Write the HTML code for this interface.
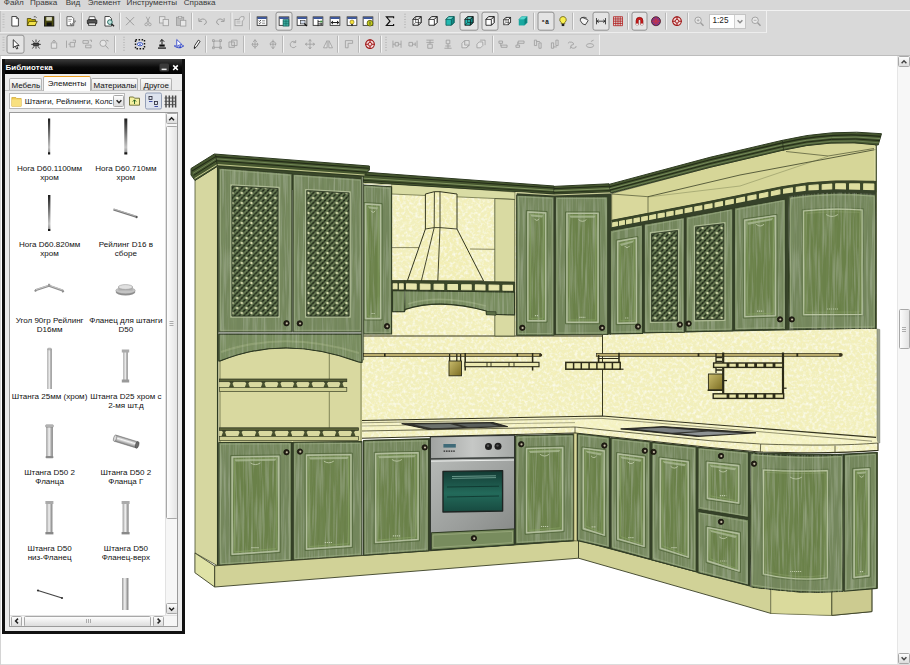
<!DOCTYPE html>
<html lang="ru"><head><meta charset="utf-8"><title>Кухня</title>
<style>
html,body{margin:0;padding:0;}
body{width:910px;height:665px;overflow:hidden;position:relative;background:#fff;font-family:"Liberation Sans",sans-serif;font-size:11px;color:#000;}
.abs{position:absolute;}
svg.kit{position:absolute;left:0;top:0;filter:blur(0.35px);}

.menubar{left:0;top:0;width:910px;height:10px;background:#d7d7d7;}
.menubar span{position:absolute;top:-2.500px;font-size:8.100px;line-height:10px;color:#3a3a3a;white-space:nowrap;}
.tbarea{left:0;top:10px;width:910px;height:45.500px;background:#d9d9d9;border-top:1px solid #f2f2f2;box-sizing:border-box;}
.tb1{left:0;top:10.500px;width:767px;height:22.500px;box-sizing:border-box;border-right:1px solid #f0f0f0;border-bottom:1px solid #ededed;box-shadow:1px 0 0 #c2c2c2 inset, -1px 0 0 #c4c4c4;}
.tb2{left:0;top:33.500px;width:600px;height:22px;box-sizing:border-box;border-right:1px solid #f0f0f0;border-top:1px solid #cbcbcb;}
.combo{left:709px;top:13.500px;width:37px;height:15px;background:#fff;border:1px solid #c4c4c4;box-sizing:border-box;}
.combo b{position:absolute;left:2.500px;top:1.500px;font-weight:400;font-size:8.200px;line-height:10px;color:#222;}
.combo i{position:absolute;right:0;top:0;width:10px;height:13px;border-left:1px solid #d0d0d0;background:#f4f4f4;}
.lib{left:2.200px;top:59.300px;width:182.600px;height:575.200px;background:#111;box-sizing:border-box;}
.libtitle{left:2.800px;top:0;width:177px;height:14.400px;background:linear-gradient(#3c3c3c,#0a0a0a 55%,#000);}
.libtitle span{position:absolute;left:0.400px;top:3.600px;font-size:8px;line-height:10px;font-weight:700;color:#fff;letter-spacing:0.05px;}
.libbody{left:2.800px;top:14.400px;width:177px;height:557.600px;background:#ececec;}
.tab{top:4.400px;height:12.700px;padding-top:0.500px;box-sizing:border-box;border:1px solid #b4b4b4;border-bottom:none;border-radius:2px 2px 0 0;background:linear-gradient(#fbfbfb,#dcdcdc);font-size:8px;line-height:11px;text-align:center;color:#111;white-space:nowrap;}
.tab.sel{top:2.100px;height:15px;padding-top:1px;background:#fcfcfc;border-top:1.600px solid #f0a020;line-height:12px;z-index:2;}
.tabline{left:0;top:16.300px;width:177px;height:1px;background:#c0c0c0;}
.cmb{left:4.300px;top:19.800px;width:116px;height:15.200px;background:#fff;border:1px solid #b8b8b8;box-sizing:border-box;}
.cmb span{position:absolute;left:14.400px;top:2.200px;font-size:7.950px;line-height:10px;white-space:nowrap;color:#111;}
.list{left:4px;top:38.300px;width:168.600px;height:515.500px;background:#fff;border:1px solid #9a9a9a;box-sizing:border-box;overflow:hidden;}
.lbl{width:80px;text-align:center;font-size:8.050px;line-height:9.500px;color:#111;white-space:nowrap;}
.vs{left:155.400px;top:0;width:12.200px;height:502.500px;background:#f6f6f6;border-left:1px solid #e2e2e2;box-sizing:border-box;}
.hs{left:0;top:502.500px;width:167px;height:11.200px;background:#f6f6f6;border-top:1px solid #e2e2e2;box-sizing:border-box;}
.sbtn{background:linear-gradient(#fdfdfd,#dcdcdc);border:1px solid #a8a8a8;box-sizing:border-box;border-radius:1.500px;}
.rs{left:897px;top:55.500px;width:13px;height:608.500px;background:#f7f7f7;border-left:1px solid #e6e6e6;box-sizing:border-box;}
.bot{left:0;top:664px;width:910px;height:1px;background:#dcdcdc;}
.lft{left:0;top:55.500px;width:1.200px;height:609px;background:#d4d4d4;}
.tbline{left:0;top:54.800px;width:910px;height:1px;background:#bdbdbd;}

</style></head><body>
<!--KITCHEN-->
<svg class="kit" width="910" height="665" viewBox="0 0 910 665">
<defs>
  <pattern id="lat" width="9.5" height="10" patternUnits="userSpaceOnUse" patternTransform="translate(2 3)">
    <rect width="9.5" height="10" fill="#222b1a"/>
    <path d="M-9.500 0L0 10M-4.750 0L4.750 10M0 0L9.500 10M4.750 0L14.250 10M9.500 0L19 10" stroke="#3d4c2f" stroke-width="1.500"/>
    <path d="M0 0L-9.500 10M4.750 0L-4.750 10M9.500 0L0 10M14.250 0L4.750 10M19 0L9.500 10" stroke="#697d55" stroke-width="1.700"/>
    <circle cx="2.375" cy="0" r="1.200" fill="#dadeb0"/><circle cx="2.375" cy="10" r="1.200" fill="#dadeb0"/><circle cx="7.125" cy="5" r="1.200" fill="#dadeb0"/>
  </pattern>
  <linearGradient id="bucket" x1="0" y1="0" x2="1" y2="1">
    <stop offset="0" stop-color="#c9bc6c"/><stop offset="1" stop-color="#7a6c22"/>
  </linearGradient>
  <linearGradient id="steelh" x1="0" y1="0" x2="1" y2="0">
    <stop offset="0" stop-color="#a0a3a1"/><stop offset="0.5" stop-color="#c6c8c6"/><stop offset="1" stop-color="#a6a9a7"/>
  </linearGradient>
  <linearGradient id="steelv" x1="0" y1="0" x2="1" y2="1">
    <stop offset="0" stop-color="#b6b9b7"/><stop offset="0.6" stop-color="#9c9f9d"/><stop offset="1" stop-color="#888b89"/>
  </linearGradient>
  <linearGradient id="glass" x1="0" y1="0" x2="0" y2="1">
    <stop offset="0" stop-color="#133a33"/><stop offset="0.55" stop-color="#236a5a"/><stop offset="1" stop-color="#174a40"/>
  </linearGradient>
  <filter id="speck" x="0" y="0" width="100%" height="100%">
    <feTurbulence type="fractalNoise" baseFrequency="0.32" numOctaves="2" seed="7" result="n"/>
    <feColorMatrix in="n" type="matrix" values="0 0 0 0 1  0 0 0 0 1  0 0 0 0 0.94  1.8 0 0 0 -0.80" result="lightdots"/>
    <feColorMatrix in="n" type="matrix" values="0 0 0 0 0.91  0 0 0 0 0.87  0 0 0 0 0.46  0 2.0 0 0 -0.76" result="darkdots"/>
    <feMerge result="m"><feMergeNode in="SourceGraphic"/><feMergeNode in="darkdots"/><feMergeNode in="lightdots"/></feMerge>
    <feComposite in="m" in2="SourceGraphic" operator="in"/>
  </filter>
  <filter id="grain" x="-2%" y="-2%" width="104%" height="104%">
    <feTurbulence type="fractalNoise" baseFrequency="0.45 0.02" numOctaves="2" seed="11" result="n"/>
    <feColorMatrix in="n" type="matrix" values="0 0 0 0 0.68  0 0 0 0 0.74  0 0 0 0 0.58  0.6 0 0 0 -0.27" result="lt"/>
    <feColorMatrix in="n" type="matrix" values="0 0 0 0 0.25  0 0 0 0 0.34  0 0 0 0 0.16  0 0.6 0 0 -0.26" result="dk"/>
    <feMerge result="m"><feMergeNode in="SourceGraphic"/><feMergeNode in="lt"/><feMergeNode in="dk"/></feMerge>
    <feComposite in="m" in2="SourceGraphic" operator="in"/>
  </filter>
</defs>
<g filter="url(#speck)">
<polygon points="362.0,186.0 603.0,186.0 603.0,420.0 362.0,422.0" fill="#f1efbe"/>
<polygon points="602.0,200.0 877.0,150.0 877.0,442.0 602.0,417.0" fill="#f1efbe"/>
</g>
<polygon points="877.0,329.0 879.8,329.5 879.8,443.0 877.0,442.0" fill="#a0a590" stroke="#6a7060" stroke-width="0.5" stroke-linejoin="round"/>
<line x1="362.0" y1="336.0" x2="602.5" y2="336.0" stroke="#38381f" stroke-width="1.1"/>
<line x1="602.5" y1="335.0" x2="602.5" y2="416.5" stroke="#38381f" stroke-width="1.0"/>
<line x1="392.0" y1="247.6" x2="425.0" y2="247.6" stroke="#5a5a3a" stroke-width="0.7"/>
<line x1="470.0" y1="249.0" x2="495.0" y2="249.3" stroke="#5a5a3a" stroke-width="0.7"/>
<polygon points="195.0,180.0 218.0,166.0 218.0,566.0 195.0,553.0" fill="#d6d7a0" stroke="#4a5030" stroke-width="0.8" stroke-linejoin="round"/>
<line x1="217.6" y1="167.0" x2="217.6" y2="565.5" stroke="#2e3a22" stroke-width="1.3"/>
<polygon points="218.5,334.0 362.0,334.0 362.0,443.0 218.5,443.0" fill="#d9d9a0"/>
<line x1="329.3" y1="352.0" x2="329.3" y2="429.0" stroke="#5a6038" stroke-width="0.7"/>
<line x1="220.0" y1="340.0" x2="220.0" y2="442.0" stroke="#6a7048" stroke-width="0.8"/>
<line x1="361.0" y1="340.0" x2="361.0" y2="442.0" stroke="#6a7048" stroke-width="0.8"/>
<rect x="219.5" y="379.0" width="127.3" height="12.6" fill="#d9d9a0"/>
<rect x="219.5" y="379.0" width="127.3" height="2.7" fill="#5a6238" stroke="#2c3320" stroke-width="0.7"/>
<path d="M229.7 381.8 h3.6 l-1 1.700 l1 3 h-3.600 l1 -3 z" fill="#4c5632" stroke="#262c1a" stroke-width="0.500"/>
<rect x="229.3" y="386.3" width="4.400" height="1.300" fill="#39421f"/>
<path d="M245.5 381.8 h3.6 l-1 1.700 l1 3 h-3.600 l1 -3 z" fill="#4c5632" stroke="#262c1a" stroke-width="0.500"/>
<rect x="245.1" y="386.3" width="4.400" height="1.300" fill="#39421f"/>
<path d="M261.6 381.8 h3.6 l-1 1.700 l1 3 h-3.600 l1 -3 z" fill="#4c5632" stroke="#262c1a" stroke-width="0.500"/>
<rect x="261.2" y="386.3" width="4.400" height="1.300" fill="#39421f"/>
<path d="M277.6 381.8 h3.6 l-1 1.700 l1 3 h-3.600 l1 -3 z" fill="#4c5632" stroke="#262c1a" stroke-width="0.500"/>
<rect x="277.2" y="386.3" width="4.400" height="1.300" fill="#39421f"/>
<path d="M293.4 381.8 h3.6 l-1 1.700 l1 3 h-3.600 l1 -3 z" fill="#4c5632" stroke="#262c1a" stroke-width="0.500"/>
<rect x="293.0" y="386.3" width="4.400" height="1.300" fill="#39421f"/>
<path d="M308.8 381.8 h3.6 l-1 1.700 l1 3 h-3.600 l1 -3 z" fill="#4c5632" stroke="#262c1a" stroke-width="0.500"/>
<rect x="308.4" y="386.3" width="4.400" height="1.300" fill="#39421f"/>
<path d="M324.2 381.8 h3.6 l-1 1.700 l1 3 h-3.600 l1 -3 z" fill="#4c5632" stroke="#262c1a" stroke-width="0.500"/>
<rect x="323.8" y="386.3" width="4.400" height="1.300" fill="#39421f"/>
<path d="M339.6 381.8 h3.6 l-1 1.700 l1 3 h-3.600 l1 -3 z" fill="#4c5632" stroke="#262c1a" stroke-width="0.500"/>
<rect x="339.2" y="386.3" width="4.400" height="1.300" fill="#39421f"/>
<rect x="219.5" y="387.6" width="127.3" height="4.0" fill="#cfd094" stroke="#3a4026" stroke-width="0.700"/>
<rect x="219.5" y="427.8" width="138.9" height="12.8" fill="#d9d9a0"/>
<rect x="219.5" y="427.8" width="138.9" height="2.7" fill="#5a6238" stroke="#2c3320" stroke-width="0.7"/>
<path d="M222.2 430.6 h3.6 l-1 1.700 l1 3 h-3.600 l1 -3 z" fill="#4c5632" stroke="#262c1a" stroke-width="0.500"/>
<rect x="221.8" y="435.1" width="4.400" height="1.300" fill="#39421f"/>
<path d="M238.8 430.6 h3.6 l-1 1.700 l1 3 h-3.600 l1 -3 z" fill="#4c5632" stroke="#262c1a" stroke-width="0.500"/>
<rect x="238.4" y="435.1" width="4.400" height="1.300" fill="#39421f"/>
<path d="M255.4 430.6 h3.6 l-1 1.700 l1 3 h-3.600 l1 -3 z" fill="#4c5632" stroke="#262c1a" stroke-width="0.500"/>
<rect x="255.0" y="435.1" width="4.400" height="1.300" fill="#39421f"/>
<path d="M271.8 430.6 h3.6 l-1 1.700 l1 3 h-3.600 l1 -3 z" fill="#4c5632" stroke="#262c1a" stroke-width="0.500"/>
<rect x="271.4" y="435.1" width="4.400" height="1.300" fill="#39421f"/>
<path d="M288.0 430.6 h3.6 l-1 1.700 l1 3 h-3.600 l1 -3 z" fill="#4c5632" stroke="#262c1a" stroke-width="0.500"/>
<rect x="287.6" y="435.1" width="4.400" height="1.300" fill="#39421f"/>
<path d="M303.8 430.6 h3.6 l-1 1.700 l1 3 h-3.600 l1 -3 z" fill="#4c5632" stroke="#262c1a" stroke-width="0.500"/>
<rect x="303.4" y="435.1" width="4.400" height="1.300" fill="#39421f"/>
<path d="M319.6 430.6 h3.6 l-1 1.700 l1 3 h-3.600 l1 -3 z" fill="#4c5632" stroke="#262c1a" stroke-width="0.500"/>
<rect x="319.2" y="435.1" width="4.400" height="1.300" fill="#39421f"/>
<path d="M335.4 430.6 h3.6 l-1 1.700 l1 3 h-3.600 l1 -3 z" fill="#4c5632" stroke="#262c1a" stroke-width="0.500"/>
<rect x="335.0" y="435.1" width="4.400" height="1.300" fill="#39421f"/>
<path d="M351.2 430.6 h3.6 l-1 1.700 l1 3 h-3.600 l1 -3 z" fill="#4c5632" stroke="#262c1a" stroke-width="0.500"/>
<rect x="350.8" y="435.1" width="4.400" height="1.300" fill="#39421f"/>
<rect x="219.5" y="436.4" width="138.9" height="4.2" fill="#cfd094" stroke="#3a4026" stroke-width="0.700"/>
<g filter="url(#grain)">
<path d="M218.8 334 L362 334 L362 362.5 L358.6 362 Q285 334.5 220 361 L218.8 361 Z" fill="#788c5e" stroke="#2e3a22" stroke-width="1" stroke-linejoin="round"/>
<path d="M221 352 Q285 330 359 353" fill="none" stroke="#9fb082" stroke-width="2.2" stroke-linejoin="round" opacity="0.5"/>
</g>
<path d="M218.8 334 L362 334 L362 362.5 L358.6 362 Q285 334.5 220 361 L218.8 361 Z" fill="none" stroke="#2e3a22" stroke-width="1.1" stroke-linejoin="round"/>
<polygon points="218.0,165.0 363.4,172.0 363.4,190.0 218.0,190.0" fill="#3c4a2b"/>
<g filter="url(#grain)">
<polygon points="218.8,168.0 292.0,173.6 292.0,332.0 218.8,332.0" fill="#73865c"/>
</g>
<polygon points="218.8,168.0 292.0,173.6 292.0,332.0 218.8,332.0" fill="none" stroke="#333f26" stroke-width="1.1" stroke-linejoin="round"/>
<polygon points="220.5,169.7 290.3,175.3 290.3,330.3 220.5,330.3" fill="none" stroke="#9cad84" stroke-width="0.9" stroke-linejoin="round" opacity="0.75"/>
<polygon points="230.8,184.8 279.2,187.4 279.2,317.2 230.8,317.2" fill="none" stroke="#aebb94" stroke-width="1.2" stroke-linejoin="round"/>
<polygon points="232.0,186.0 278.0,188.6 278.0,316.0 232.0,316.0" fill="url(#lat)" stroke="#34402a" stroke-width="0.9" stroke-linejoin="round"/>
<g filter="url(#grain)">
<polygon points="293.0,174.0 362.0,178.6 362.0,332.0 293.0,332.0" fill="#73865c"/>
</g>
<polygon points="293.0,174.0 362.0,178.6 362.0,332.0 293.0,332.0" fill="none" stroke="#333f26" stroke-width="1.1" stroke-linejoin="round"/>
<polygon points="294.7,175.7 360.3,180.3 360.3,330.3 294.7,330.3" fill="none" stroke="#9cad84" stroke-width="0.9" stroke-linejoin="round" opacity="0.75"/>
<polygon points="305.6,189.5 350.2,191.8 350.2,317.2 305.6,317.2" fill="none" stroke="#aebb94" stroke-width="1.2" stroke-linejoin="round"/>
<polygon points="306.8,190.7 349.0,193.0 349.0,316.0 306.8,316.0" fill="url(#lat)" stroke="#34402a" stroke-width="0.9" stroke-linejoin="round"/>
<circle cx="286.5" cy="323.2" r="2.7" fill="#241f15" stroke="#100e09" stroke-width="0.7"/><circle cx="286.8" cy="323.3" r="1.1" fill="#c2bba4"/>
<circle cx="299.8" cy="323.4" r="2.7" fill="#241f15" stroke="#100e09" stroke-width="0.7"/><circle cx="300.1" cy="323.5" r="1.1" fill="#c2bba4"/>
<polygon points="218.8,442.4 362.0,441.6 362.0,555.6 218.8,565.4" fill="#36422a"/>
<g filter="url(#grain)">
<polygon points="218.8,442.5 291.4,442.2 291.4,561.0 218.8,565.4" fill="#73865c"/>
<polygon points="230.9,455.7 280.0,455.1 280.0,552.3 230.9,555.6" fill="#82966a"/>
<polygon points="232.4,457.2 278.5,456.6 278.5,550.8 232.4,554.1" fill="#6c834b"/>
<polygon points="234.6,459.4 276.3,458.8 276.3,548.6 234.6,551.9" fill="#6a8149"/>
</g>
<polygon points="218.8,442.5 291.4,442.2 291.4,561.0 218.8,565.4" fill="none" stroke="#333f26" stroke-width="1.1" stroke-linejoin="round"/>
<polygon points="220.5,444.2 289.7,443.9 289.7,559.3 220.5,563.7" fill="none" stroke="#9cad84" stroke-width="0.9" stroke-linejoin="round" opacity="0.75"/>
<polygon points="230.7,455.5 280.2,454.9 280.2,552.5 230.7,555.8" fill="none" stroke="#4f6338" stroke-width="0.8" stroke-linejoin="round"/>
<polygon points="232.2,457.0 278.7,456.4 278.7,551.0 232.2,554.3" fill="none" stroke="#b2be9c" stroke-width="1.4" stroke-linejoin="round"/>
<polygon points="234.6,459.4 276.3,458.8 276.3,548.6 234.6,551.9" fill="none" stroke="#8aa463" stroke-width="0.6" stroke-linejoin="round"/>
<polygon points="234.6,459.4 276.3,458.8 275.1,460.8 235.8,461.4" fill="#b2c09c" opacity="0.7"/>
<path d="M250.4 462.9 q5.0 3.4 10.0 0" fill="none" stroke="#c6d1b2" stroke-width="0.9" opacity="0.85"/>
<path d="M251.4 547.6 h8.0" fill="none" stroke="#cbd6b8" stroke-width="1.2" stroke-dasharray="1.2 0.8" opacity="0.85"/>
<g filter="url(#grain)">
<polygon points="293.2,442.2 362.0,441.6 362.0,555.6 293.2,560.2" fill="#73865c"/>
<polygon points="305.3,453.9 352.2,453.3 352.2,547.3 305.3,550.3" fill="#82966a"/>
<polygon points="306.8,455.4 350.7,454.8 350.7,545.8 306.8,548.8" fill="#6c834b"/>
<polygon points="309.0,457.6 348.5,457.0 348.5,543.6 309.0,546.6" fill="#6a8149"/>
</g>
<polygon points="293.2,442.2 362.0,441.6 362.0,555.6 293.2,560.2" fill="none" stroke="#333f26" stroke-width="1.1" stroke-linejoin="round"/>
<polygon points="294.9,443.9 360.3,443.3 360.3,553.9 294.9,558.5" fill="none" stroke="#9cad84" stroke-width="0.9" stroke-linejoin="round" opacity="0.75"/>
<polygon points="305.1,453.7 352.4,453.1 352.4,547.5 305.1,550.5" fill="none" stroke="#4f6338" stroke-width="0.8" stroke-linejoin="round"/>
<polygon points="306.6,455.2 350.9,454.6 350.9,546.0 306.6,549.0" fill="none" stroke="#b2be9c" stroke-width="1.4" stroke-linejoin="round"/>
<polygon points="309.0,457.6 348.5,457.0 348.5,543.6 309.0,546.6" fill="none" stroke="#8aa463" stroke-width="0.6" stroke-linejoin="round"/>
<polygon points="309.0,457.6 348.5,457.0 347.3,459.0 310.2,459.6" fill="#b2c09c" opacity="0.7"/>
<path d="M323.8 461.1 q5.0 3.4 10.0 0" fill="none" stroke="#c6d1b2" stroke-width="0.9" opacity="0.85"/>
<path d="M324.8 542.5 h8.0" fill="none" stroke="#cbd6b8" stroke-width="1.2" stroke-dasharray="1.2 0.8" opacity="0.85"/>
<circle cx="286.5" cy="452.2" r="2.7" fill="#241f15" stroke="#100e09" stroke-width="0.7"/><circle cx="286.8" cy="452.3" r="1.1" fill="#c2bba4"/>
<circle cx="300.0" cy="451.6" r="2.7" fill="#241f15" stroke="#100e09" stroke-width="0.7"/><circle cx="300.3" cy="451.7" r="1.1" fill="#c2bba4"/>
<polygon points="391.6,183.5 515.0,192.0 515.0,199.5 495.0,198.5 391.6,194.0" fill="#d9dca4" stroke="#5a6038" stroke-width="0.7" stroke-linejoin="round"/>
<polygon points="494.8,198.5 514.8,199.5 514.8,336.0 494.8,336.0" fill="#d9daa2" stroke="#4a5030" stroke-width="0.8" stroke-linejoin="round"/>
<g filter="url(#speck)">
<polygon points="425.4,194.0 434.4,191.7 440.0,191.7 457.0,194.0 457.0,229.0 483.6,281.0 407.3,281.0 425.4,229.0" fill="#f0edb6"/>
</g>
<path d="M425.4 194 L434.4 191.7 L440 191.7 L457 194 L457 229 L483.6 281 L407.3 281 L425.4 229 Z" fill="none" stroke="#33361f" stroke-width="1" stroke-linejoin="round"/>
<path d="M425.4 229 L434.2 227.6 L440 227.6 L457 229" fill="none" stroke="#33361f" stroke-width="0.9" stroke-linejoin="round"/>
<path d="M434.4 191.7 L434.2 227.6 L421.3 281 M440 191.7 L440 227.6 L437.8 281" fill="none" stroke="#33361f" stroke-width="0.9" stroke-linejoin="round"/>
<polygon points="392.0,280.5 404.5,280.5 404.5,290.8 392.0,290.5" fill="#3b4729" stroke="#2e3a22" stroke-width="0.8" stroke-linejoin="round"/>
<polygon points="393.2,283.9 397.0,283.9 397.0,288.8 393.2,288.7" fill="#e6e5ac" stroke="#e6e5ac" stroke-width="1.1" stroke-linejoin="round"/>
<polygon points="399.5,283.9 403.2,283.9 403.2,289.0 399.5,288.9" fill="#e6e5ac" stroke="#e6e5ac" stroke-width="1.1" stroke-linejoin="round"/>
<polygon points="404.5,280.5 514.6,282.0 514.6,292.0 404.5,290.8" fill="#3b4729" stroke="#2e3a22" stroke-width="0.8" stroke-linejoin="round"/>
<polygon points="406.6,283.9 416.2,284.1 416.2,289.1 406.6,289.0" fill="#e6e5ac" stroke="#e6e5ac" stroke-width="1.1" stroke-linejoin="round"/>
<polygon points="420.3,284.1 430.0,284.2 430.0,289.3 420.3,289.2" fill="#e6e5ac" stroke="#e6e5ac" stroke-width="1.1" stroke-linejoin="round"/>
<polygon points="434.1,284.3 443.7,284.4 443.7,289.4 434.1,289.3" fill="#e6e5ac" stroke="#e6e5ac" stroke-width="1.1" stroke-linejoin="round"/>
<polygon points="447.9,284.5 457.5,284.6 457.5,289.6 447.9,289.5" fill="#e6e5ac" stroke="#e6e5ac" stroke-width="1.1" stroke-linejoin="round"/>
<polygon points="461.6,284.7 471.2,284.8 471.2,289.7 461.6,289.6" fill="#e6e5ac" stroke="#e6e5ac" stroke-width="1.1" stroke-linejoin="round"/>
<polygon points="475.4,284.9 485.0,285.0 485.0,289.9 475.4,289.8" fill="#e6e5ac" stroke="#e6e5ac" stroke-width="1.1" stroke-linejoin="round"/>
<polygon points="489.1,285.1 498.8,285.2 498.8,290.0 489.1,289.9" fill="#e6e5ac" stroke="#e6e5ac" stroke-width="1.1" stroke-linejoin="round"/>
<polygon points="502.9,285.2 512.5,285.4 512.5,290.2 502.9,290.1" fill="#e6e5ac" stroke="#e6e5ac" stroke-width="1.1" stroke-linejoin="round"/>
<g filter="url(#grain)">
<path d="M392.4 290.5 L514.6 292 L514.6 315 L486.5 314.2 L486.3 311 Q440 298 405 309.5 L404.6 311.6 L392.4 311.8 Z" fill="#788c5e" stroke="#2e3a22" stroke-width="1" stroke-linejoin="round"/>
<line x1="404.8" y1="291.0" x2="404.8" y2="311.0" stroke="#2e3a22" stroke-width="1.1"/>
<path d="M408 304 Q440 294 486 306" fill="none" stroke="#a6b68a" stroke-width="1.8" stroke-linejoin="round" opacity="0.5"/>
</g>
<path d="M392.4 290.5 L514.6 292 L514.6 315 L486.5 314.2 L486.3 311 Q440 298 405 309.5 L404.6 311.6 L392.4 311.8 Z" fill="none" stroke="#2e3a22" stroke-width="1.1" stroke-linejoin="round"/>
<polygon points="486.3,311.5 496.0,311.8 496.0,315.2 486.3,314.8" fill="#5d7046" stroke="#2e3a22" stroke-width="0.7" stroke-linejoin="round"/>
<polygon points="363.4,185.0 391.6,186.8 391.6,334.0 363.4,334.0" fill="#36422a"/>
<polygon points="516.7,193.0 611.0,191.5 611.0,334.4 516.7,335.2" fill="#36422a"/>
<g filter="url(#grain)">
<polygon points="363.4,185.0 391.6,186.8 391.6,334.0 363.4,334.0" fill="#73865c"/>
<polygon points="364.3,202.7 381.9,203.7 381.9,319.8 364.3,319.8" fill="#82966a"/>
<polygon points="365.8,204.2 380.4,205.2 380.4,318.3 365.8,318.3" fill="#6c834b"/>
<polygon points="368.0,206.4 378.2,207.4 378.2,316.1 368.0,316.1" fill="#6a8149"/>
</g>
<polygon points="363.4,185.0 391.6,186.8 391.6,334.0 363.4,334.0" fill="none" stroke="#333f26" stroke-width="1.1" stroke-linejoin="round"/>
<polygon points="365.1,186.7 389.9,188.5 389.9,332.3 365.1,332.3" fill="none" stroke="#9cad84" stroke-width="0.9" stroke-linejoin="round" opacity="0.75"/>
<polygon points="364.1,202.5 382.1,203.5 382.1,320.0 364.1,320.0" fill="none" stroke="#4f6338" stroke-width="0.8" stroke-linejoin="round"/>
<polygon points="365.6,204.0 380.6,205.0 380.6,318.5 365.6,318.5" fill="none" stroke="#b2be9c" stroke-width="1.4" stroke-linejoin="round"/>
<polygon points="368.0,206.4 378.2,207.4 378.2,316.1 368.0,316.1" fill="none" stroke="#8aa463" stroke-width="0.6" stroke-linejoin="round"/>
<polygon points="368.0,206.4 378.2,207.4 377.0,209.4 369.2,208.4" fill="#b2c09c" opacity="0.7"/>
<path d="M371.1 210.7 q2.0 3.4 4.1 0" fill="none" stroke="#c6d1b2" stroke-width="0.9" opacity="0.85"/>
<path d="M371.5 313.5 h3.3" fill="none" stroke="#cbd6b8" stroke-width="1.2" stroke-dasharray="1.2 0.8" opacity="0.85"/>
<circle cx="387.0" cy="326.2" r="2.7" fill="#241f15" stroke="#100e09" stroke-width="0.7"/><circle cx="387.3" cy="326.3" r="1.1" fill="#c2bba4"/>
<g filter="url(#grain)">
<polygon points="516.7,195.0 554.0,196.7 554.0,335.2 516.7,335.2" fill="#73865c"/>
<polygon points="526.6,210.7 546.9,211.7 546.9,322.0 526.6,322.0" fill="#82966a"/>
<polygon points="528.1,212.2 545.4,213.2 545.4,320.5 528.1,320.5" fill="#6c834b"/>
<polygon points="530.3,214.4 543.2,215.4 543.2,318.3 530.3,318.3" fill="#6a8149"/>
</g>
<polygon points="516.7,195.0 554.0,196.7 554.0,335.2 516.7,335.2" fill="none" stroke="#333f26" stroke-width="1.1" stroke-linejoin="round"/>
<polygon points="518.4,196.7 552.3,198.4 552.3,333.5 518.4,333.5" fill="none" stroke="#9cad84" stroke-width="0.9" stroke-linejoin="round" opacity="0.75"/>
<polygon points="526.4,210.5 547.1,211.5 547.1,322.2 526.4,322.2" fill="none" stroke="#4f6338" stroke-width="0.8" stroke-linejoin="round"/>
<polygon points="527.9,212.0 545.6,213.0 545.6,320.7 527.9,320.7" fill="none" stroke="#b2be9c" stroke-width="1.4" stroke-linejoin="round"/>
<polygon points="530.3,214.4 543.2,215.4 543.2,318.3 530.3,318.3" fill="none" stroke="#8aa463" stroke-width="0.6" stroke-linejoin="round"/>
<polygon points="530.3,214.4 543.2,215.4 542.0,217.4 531.5,216.4" fill="#b2c09c" opacity="0.7"/>
<path d="M534.4 218.7 q2.4 3.4 4.7 0" fill="none" stroke="#c6d1b2" stroke-width="0.9" opacity="0.85"/>
<path d="M534.9 315.7 h3.8" fill="none" stroke="#cbd6b8" stroke-width="1.2" stroke-dasharray="1.2 0.8" opacity="0.85"/>
<circle cx="522.3" cy="327.8" r="2.7" fill="#241f15" stroke="#100e09" stroke-width="0.7"/><circle cx="522.6" cy="327.9" r="1.1" fill="#c2bba4"/>
<g filter="url(#grain)">
<polygon points="555.3,196.7 607.8,196.7 607.8,334.5 555.3,334.7" fill="#73865c"/>
<polygon points="565.7,212.1 599.3,212.1 599.3,323.6 565.7,323.6" fill="#82966a"/>
<polygon points="567.2,213.6 597.8,213.6 597.8,322.1 567.2,322.1" fill="#6c834b"/>
<polygon points="569.4,215.8 595.6,215.8 595.6,319.9 569.4,319.9" fill="#6a8149"/>
</g>
<polygon points="555.3,196.7 607.8,196.7 607.8,334.5 555.3,334.7" fill="none" stroke="#333f26" stroke-width="1.1" stroke-linejoin="round"/>
<polygon points="557.0,198.4 606.1,198.4 606.1,332.8 557.0,333.0" fill="none" stroke="#9cad84" stroke-width="0.9" stroke-linejoin="round" opacity="0.75"/>
<polygon points="565.5,211.9 599.5,211.9 599.5,323.8 565.5,323.8" fill="none" stroke="#4f6338" stroke-width="0.8" stroke-linejoin="round"/>
<polygon points="567.0,213.4 598.0,213.4 598.0,322.3 567.0,322.3" fill="none" stroke="#b2be9c" stroke-width="1.4" stroke-linejoin="round"/>
<polygon points="569.4,215.8 595.6,215.8 595.6,319.9 569.4,319.9" fill="none" stroke="#8aa463" stroke-width="0.6" stroke-linejoin="round"/>
<polygon points="569.4,215.8 595.6,215.8 594.4,217.8 570.6,217.8" fill="#b2c09c" opacity="0.7"/>
<path d="M578.5 219.6 q4.0 3.4 7.9 0" fill="none" stroke="#c6d1b2" stroke-width="0.9" opacity="0.85"/>
<path d="M579.3 317.3 h6.3" fill="none" stroke="#cbd6b8" stroke-width="1.2" stroke-dasharray="1.2 0.8" opacity="0.85"/>
<circle cx="602.0" cy="327.8" r="2.7" fill="#241f15" stroke="#100e09" stroke-width="0.7"/><circle cx="602.3" cy="327.9" r="1.1" fill="#c2bba4"/>
<polygon points="361.5,176.0 363.6,176.0 363.6,360.0 361.5,360.0" fill="#7f8a70" stroke="#3a4428" stroke-width="0.5" stroke-linejoin="round"/>
<polygon points="363.5,172.1 554.0,186.0 554.0,193.8 363.5,182.4" fill="#46572f" stroke="#2e3a22" stroke-width="1" stroke-linejoin="round"/>
<line x1="363.5" y1="174.8" x2="554.0" y2="188.0" stroke="#222b18" stroke-width="1"/>
<line x1="363.5" y1="178.2" x2="554.0" y2="190.4" stroke="#8a9d68" stroke-width="0.9"/>
<line x1="363.5" y1="180.4" x2="554.0" y2="192.2" stroke="#222b18" stroke-width="0.8"/>
<polygon points="554.0,186.4 609.0,183.8 611.0,192.0 554.0,194.2" fill="#46572f" stroke="#2e3a22" stroke-width="1" stroke-linejoin="round"/>
<line x1="554.0" y1="188.6" x2="609.5" y2="186.2" stroke="#222b18" stroke-width="1"/>
<line x1="554.0" y1="190.8" x2="610.0" y2="188.6" stroke="#8a9d68" stroke-width="0.9"/>
<line x1="554.0" y1="192.6" x2="610.5" y2="190.4" stroke="#222b18" stroke-width="0.8"/>
<path d="M516.7 192.6 L554 195 L611 192.8" fill="none" stroke="#c9cc96" stroke-width="1.2" stroke-linejoin="round"/>
<path d="M363.5 183.4 L391.6 185.2" fill="none" stroke="#c9cc96" stroke-width="1.0" stroke-linejoin="round"/>
<polygon points="191.0,168.5 214.3,154.0 369.4,166.0 369.4,170.0 363.4,176.2 217.5,166.2 195.0,180.5 191.0,175.0" fill="#46572f" stroke="#2e3a22" stroke-width="1" stroke-linejoin="round"/>
<path d="M192 171 L215.6 156.6 L368.8 168.2" fill="none" stroke="#222b18" stroke-width="1.1" stroke-linejoin="round"/>
<path d="M193 173.4 L216.2 158.8 L367.6 170.4" fill="none" stroke="#74885a" stroke-width="0.9" stroke-linejoin="round"/>
<path d="M193.6 175.4 L216.6 160.8 L366.4 172.2" fill="none" stroke="#222b18" stroke-width="1.0" stroke-linejoin="round"/>
<path d="M194.6 178.6 L217.2 164.6 L364.6 175" fill="none" stroke="#c3c78e" stroke-width="1.0" stroke-linejoin="round"/>
<line x1="215.6" y1="155.0" x2="217.4" y2="166.0" stroke="#222b18" stroke-width="0.8"/>
<path d="M611.7 193.5 L710 167.3 L782 150.2 Q830 138.6 876 144.5 L876 182 Q830 178 782 187 L710 201.5 L611.7 220.8 Z" fill="#d6d698" stroke="#4a5030" stroke-width="0.7" stroke-linejoin="round"/>
<polygon points="611.7,194.0 648.0,196.7 648.0,213.5 611.7,220.5" fill="#d9d89c" stroke="#4a5030" stroke-width="0.7" stroke-linejoin="round"/>
<path d="M648 196.7 L740 175 L876 149.5" fill="none" stroke="#3a4026" stroke-width="0.8" stroke-linejoin="round"/>
<path d="M786 151.5 L828 156 L874 148.5" fill="none" stroke="#4a5030" stroke-width="0.7" stroke-linejoin="round"/>
<path d="M648 197 L740 186 L828 156.3" fill="none" stroke="#5a6038" stroke-width="0.5" stroke-linejoin="round" opacity="0.7"/>
<polygon points="611.7,220.3 710.0,201.3 782.0,186.7 808.0,182.8 836.0,181.0 876.0,181.2 876.0,192.4 836.0,191.6 808.0,192.6 782.0,195.8 710.0,210.0 611.7,228.6" fill="#3b4729" stroke="#2e3a22" stroke-width="0.8" stroke-linejoin="round"/>
<polygon points="612.7,222.9 617.4,222.0 617.4,226.0 612.7,226.9" fill="#dedea0" stroke="#dedea0" stroke-width="1.1" stroke-linejoin="round"/>
<polygon points="619.5,221.6 624.4,220.6 624.4,224.7 619.5,225.6" fill="#dedea0" stroke="#dedea0" stroke-width="1.1" stroke-linejoin="round"/>
<polygon points="626.6,220.2 631.7,219.2 631.7,223.3 626.6,224.3" fill="#dedea0" stroke="#dedea0" stroke-width="1.1" stroke-linejoin="round"/>
<polygon points="634.0,218.8 639.3,217.8 639.3,221.9 634.0,222.9" fill="#dedea0" stroke="#dedea0" stroke-width="1.1" stroke-linejoin="round"/>
<polygon points="641.7,217.3 647.3,216.2 647.3,220.4 641.7,221.4" fill="#dedea0" stroke="#dedea0" stroke-width="1.1" stroke-linejoin="round"/>
<polygon points="649.7,215.7 655.6,214.6 655.6,218.8 649.7,219.9" fill="#dedea0" stroke="#dedea0" stroke-width="1.1" stroke-linejoin="round"/>
<polygon points="658.1,214.1 664.2,213.0 664.2,217.2 658.1,218.3" fill="#dedea0" stroke="#dedea0" stroke-width="1.1" stroke-linejoin="round"/>
<polygon points="666.8,212.4 673.1,211.2 673.1,215.5 666.8,216.7" fill="#dedea0" stroke="#dedea0" stroke-width="1.1" stroke-linejoin="round"/>
<polygon points="675.8,210.7 682.3,209.5 682.3,213.7 675.8,215.0" fill="#dedea0" stroke="#dedea0" stroke-width="1.1" stroke-linejoin="round"/>
<polygon points="685.1,208.9 691.9,207.6 691.9,211.9 685.1,213.2" fill="#dedea0" stroke="#dedea0" stroke-width="1.1" stroke-linejoin="round"/>
<polygon points="694.8,207.0 701.8,205.7 701.8,210.1 694.8,211.4" fill="#dedea0" stroke="#dedea0" stroke-width="1.1" stroke-linejoin="round"/>
<polygon points="704.8,205.1 712.0,203.7 712.0,208.1 704.8,209.5" fill="#dedea0" stroke="#dedea0" stroke-width="1.1" stroke-linejoin="round"/>
<polygon points="715.1,203.1 722.5,201.6 722.5,206.0 715.1,207.5" fill="#dedea0" stroke="#dedea0" stroke-width="1.1" stroke-linejoin="round"/>
<polygon points="725.7,200.9 733.3,199.4 733.3,203.9 725.7,205.4" fill="#dedea0" stroke="#dedea0" stroke-width="1.1" stroke-linejoin="round"/>
<polygon points="736.6,198.7 744.5,197.1 744.5,201.7 736.6,203.2" fill="#dedea0" stroke="#dedea0" stroke-width="1.1" stroke-linejoin="round"/>
<polygon points="747.9,196.4 756.0,194.8 756.0,199.4 747.9,201.0" fill="#dedea0" stroke="#dedea0" stroke-width="1.1" stroke-linejoin="round"/>
<polygon points="759.5,194.1 767.8,192.4 767.8,197.1 759.5,198.7" fill="#dedea0" stroke="#dedea0" stroke-width="1.1" stroke-linejoin="round"/>
<polygon points="771.4,191.7 779.9,189.9 779.9,194.7 771.4,196.4" fill="#dedea0" stroke="#dedea0" stroke-width="1.1" stroke-linejoin="round"/>
<polygon points="783.6,189.3 792.4,187.9 792.4,193.0 783.6,194.1" fill="#dedea0" stroke="#dedea0" stroke-width="1.1" stroke-linejoin="round"/>
<polygon points="796.2,187.4 805.1,186.0 805.1,191.5 796.2,192.6" fill="#dedea0" stroke="#dedea0" stroke-width="1.1" stroke-linejoin="round"/>
<polygon points="809.0,185.5 818.2,184.9 818.2,190.7 809.0,191.1" fill="#dedea0" stroke="#dedea0" stroke-width="1.1" stroke-linejoin="round"/>
<polygon points="822.2,184.7 831.7,184.1 831.7,190.3 822.2,190.6" fill="#dedea0" stroke="#dedea0" stroke-width="1.1" stroke-linejoin="round"/>
<polygon points="835.7,183.8 845.4,183.8 845.4,190.3 835.7,190.1" fill="#dedea0" stroke="#dedea0" stroke-width="1.1" stroke-linejoin="round"/>
<polygon points="849.6,183.9 859.5,183.9 859.5,190.6 849.6,190.4" fill="#dedea0" stroke="#dedea0" stroke-width="1.1" stroke-linejoin="round"/>
<polygon points="863.7,183.9 873.8,184.0 873.8,190.9 863.7,190.7" fill="#dedea0" stroke="#dedea0" stroke-width="1.1" stroke-linejoin="round"/>
<polygon points="610.3,227.5 710.0,208.6 782.0,194.0 808.0,190.4 836.0,189.2 876.0,190.2 876.0,328.5 610.3,334.0" fill="#36422a"/>
<g filter="url(#grain)">
<polygon points="610.3,230.5 642.6,224.8 642.6,333.4 610.3,333.9" fill="#73865c"/>
<polygon points="616.4,240.2 637.7,236.7 637.7,324.1 616.4,324.5" fill="#82966a"/>
<polygon points="617.9,241.7 636.2,238.2 636.2,322.6 617.9,323.0" fill="#6c834b"/>
<polygon points="620.1,243.9 634.0,240.4 634.0,320.4 620.1,320.8" fill="#6a8149"/>
</g>
<polygon points="610.3,230.5 642.6,224.8 642.6,333.4 610.3,333.9" fill="none" stroke="#333f26" stroke-width="1.1" stroke-linejoin="round"/>
<polygon points="612.0,232.2 640.9,226.5 640.9,331.7 612.0,332.2" fill="none" stroke="#9cad84" stroke-width="0.9" stroke-linejoin="round" opacity="0.75"/>
<polygon points="616.2,240.0 637.9,236.5 637.9,324.3 616.2,324.7" fill="none" stroke="#4f6338" stroke-width="0.8" stroke-linejoin="round"/>
<polygon points="617.7,241.5 636.4,238.0 636.4,322.8 617.7,323.2" fill="none" stroke="#b2be9c" stroke-width="1.4" stroke-linejoin="round"/>
<polygon points="620.1,243.9 634.0,240.4 634.0,320.4 620.1,320.8" fill="none" stroke="#8aa463" stroke-width="0.6" stroke-linejoin="round"/>
<polygon points="620.1,243.9 634.0,240.4 632.8,242.4 621.3,245.9" fill="#b2c09c" opacity="0.7"/>
<path d="M624.6 245.9 q2.5 3.4 5.0 0" fill="none" stroke="#c6d1b2" stroke-width="0.9" opacity="0.85"/>
<path d="M625.1 318.0 h4.0" fill="none" stroke="#cbd6b8" stroke-width="1.2" stroke-dasharray="1.2 0.8" opacity="0.85"/>
<circle cx="638.0" cy="326.6" r="2.7" fill="#241f15" stroke="#100e09" stroke-width="0.7"/><circle cx="638.3" cy="326.7" r="1.1" fill="#c2bba4"/>
<g filter="url(#grain)">
<polygon points="644.2,224.2 684.3,217.4 684.3,332.2 644.2,332.8" fill="#73865c"/>
</g>
<polygon points="644.2,224.2 684.3,217.4 684.3,332.2 644.2,332.8" fill="none" stroke="#333f26" stroke-width="1.1" stroke-linejoin="round"/>
<polygon points="645.9,225.9 682.6,219.1 682.6,330.5 645.9,331.1" fill="none" stroke="#9cad84" stroke-width="0.9" stroke-linejoin="round" opacity="0.75"/>
<polygon points="650.4,232.7 678.7,229.3 678.7,322.0 650.4,322.4" fill="none" stroke="#aebb94" stroke-width="1.2" stroke-linejoin="round"/>
<polygon points="651.6,233.9 677.5,230.5 677.5,320.8 651.6,321.2" fill="url(#lat)" stroke="#34402a" stroke-width="0.9" stroke-linejoin="round"/>
<circle cx="679.8" cy="324.6" r="2.7" fill="#241f15" stroke="#100e09" stroke-width="0.7"/><circle cx="680.1" cy="324.7" r="1.1" fill="#c2bba4"/>
<g filter="url(#grain)">
<polygon points="686.0,217.0 732.8,208.4 732.8,330.8 686.0,331.6" fill="#73865c"/>
</g>
<polygon points="686.0,217.0 732.8,208.4 732.8,330.8 686.0,331.6" fill="none" stroke="#333f26" stroke-width="1.1" stroke-linejoin="round"/>
<polygon points="687.7,218.7 731.1,210.1 731.1,329.1 687.7,329.9" fill="none" stroke="#9cad84" stroke-width="0.9" stroke-linejoin="round" opacity="0.75"/>
<polygon points="694.4,226.0 725.0,222.6 725.0,320.4 694.4,320.8" fill="none" stroke="#aebb94" stroke-width="1.2" stroke-linejoin="round"/>
<polygon points="695.6,227.2 723.8,223.8 723.8,319.2 695.6,319.6" fill="url(#lat)" stroke="#34402a" stroke-width="0.9" stroke-linejoin="round"/>
<circle cx="688.6" cy="323.6" r="2.7" fill="#241f15" stroke="#100e09" stroke-width="0.7"/><circle cx="688.9" cy="323.7" r="1.1" fill="#c2bba4"/>
<g filter="url(#grain)">
<polygon points="734.4,208.0 785.5,199.0 785.5,329.2 734.4,330.2" fill="#73865c"/>
<polygon points="743.5,219.1 776.8,214.5 776.8,316.9 743.5,317.9" fill="#82966a"/>
<polygon points="745.0,220.6 775.3,216.0 775.3,315.4 745.0,316.4" fill="#6c834b"/>
<polygon points="747.2,222.8 773.1,218.2 773.1,313.2 747.2,314.2" fill="#6a8149"/>
</g>
<polygon points="734.4,208.0 785.5,199.0 785.5,329.2 734.4,330.2" fill="none" stroke="#333f26" stroke-width="1.1" stroke-linejoin="round"/>
<polygon points="736.1,209.7 783.8,200.7 783.8,327.5 736.1,328.5" fill="none" stroke="#9cad84" stroke-width="0.9" stroke-linejoin="round" opacity="0.75"/>
<polygon points="743.3,218.9 777.0,214.3 777.0,317.1 743.3,318.1" fill="none" stroke="#4f6338" stroke-width="0.8" stroke-linejoin="round"/>
<polygon points="744.8,220.4 775.5,215.8 775.5,315.6 744.8,316.6" fill="none" stroke="#b2be9c" stroke-width="1.4" stroke-linejoin="round"/>
<polygon points="747.2,222.8 773.1,218.2 773.1,313.2 747.2,314.2" fill="none" stroke="#8aa463" stroke-width="0.6" stroke-linejoin="round"/>
<polygon points="747.2,222.8 773.1,218.2 771.9,220.2 748.4,224.8" fill="#b2c09c" opacity="0.7"/>
<path d="M756.2 224.3 q3.9 3.4 7.8 0" fill="none" stroke="#c6d1b2" stroke-width="0.9" opacity="0.85"/>
<path d="M757.0 311.1 h6.3" fill="none" stroke="#cbd6b8" stroke-width="1.2" stroke-dasharray="1.2 0.8" opacity="0.85"/>
<circle cx="780.0" cy="319.4" r="2.7" fill="#241f15" stroke="#100e09" stroke-width="0.7"/><circle cx="780.3" cy="319.5" r="1.1" fill="#c2bba4"/>
<g filter="url(#grain)">
<path d="M789 196.8 Q832 190.5 875.7 194.6 L875.7 328.5 L789 329.2 Z" fill="#73865c" stroke="#2e3a22" stroke-width="1.2" stroke-linejoin="round"/>
<path d="M790.6 198.4 Q832 192.3 874.1 196.2 L874.1 326.9 L790.6 327.6 Z" fill="none" stroke="#a3b286" stroke-width="0.9" stroke-linejoin="round" opacity="0.75"/>
<path d="M802.2 209.6 Q832 206.4 863.5 208.6 L863.5 315.8 L802.2 316 Z" fill="#82966a" stroke="#53663c" stroke-width="0.7" stroke-linejoin="round"/>
<path d="M803.7 211 Q832 207.8 862 210 L862 314.4 L803.7 314.6 Z" fill="#6c834b" stroke="#b9c5a0" stroke-width="1.1" stroke-linejoin="round"/>
<path d="M806 213.4 Q832 210.4 859.8 212.4 L859.8 312 L806 312.2 Z" fill="#6a8149" stroke="#869a62" stroke-width="0.6" stroke-linejoin="round"/>
<path d="M826 214.5 q6 4 12 0" fill="none" stroke="#c3cfae" stroke-width="0.9" opacity="0.85"/>
<path d="M827 309 h11" fill="none" stroke="#c9d4b4" stroke-width="1.2" stroke-dasharray="1.2 0.8" opacity="0.85"/>
</g>
<circle cx="791.8" cy="319.4" r="2.7" fill="#241f15" stroke="#100e09" stroke-width="0.7"/><circle cx="792.1" cy="319.5" r="1.1" fill="#c2bba4"/>
<line x1="787.3" y1="197.0" x2="787.3" y2="329.5" stroke="#39452a" stroke-width="1.6"/>
<path d="M609 184.4 L710 157.3 L782 140.4 Q832 128.6 881.5 133.7 L878.2 145 Q832 138.4 782 150.4 L710 167.3 L611 193 Z" fill="#46572f" stroke="#2e3a22" stroke-width="1" stroke-linejoin="round"/>
<path d="M609.5 186.8 L710 159.8 L782 142.9 Q832 131.4 880.8 136.4" fill="none" stroke="#222b18" stroke-width="1.1" stroke-linejoin="round"/>
<path d="M610 188.6 L710 161.8 L782 144.9 Q832 133.4 880.2 138.6" fill="none" stroke="#74885a" stroke-width="1.0" stroke-linejoin="round"/>
<path d="M610.3 190 L710 163.6 L782 146.7 Q832 135.2 879.6 140.6" fill="none" stroke="#222b18" stroke-width="1.0" stroke-linejoin="round"/>
<path d="M610.7 191.6 L710 165.5 L782 148.6 Q832 136.9 879 142.8" fill="none" stroke="#74885a" stroke-width="0.8" stroke-linejoin="round"/>
<line x1="782.4" y1="140.4" x2="783.6" y2="150.6" stroke="#27311c" stroke-width="0.8"/>
<line x1="876.2" y1="145.0" x2="876.2" y2="329.0" stroke="#39452a" stroke-width="1.2"/>
<line x1="875.0" y1="146.0" x2="875.0" y2="181.0" stroke="#e4e5b0" stroke-width="1.0"/>
<rect x="363.5" y="353.6" width="177" height="2.8" fill="#bcae6e" stroke="#2b2a18" stroke-width="0.7"/>
<circle cx="540.6" cy="355" r="1.6" fill="#3a3420"/>
<rect x="384" y="353.4" width="1.6" height="3.2" fill="#2b2a18"/>
<rect x="516.5" y="353.4" width="1.6" height="3.2" fill="#2b2a18"/>
<path d="M449.6 354 v7 M460.6 354 v7 M456.8 354 v7" stroke="#2b2a18" stroke-width="1.3" fill="none"/>
<rect x="449" y="361" width="12.5" height="14.8" fill="url(#bucket)" stroke="#2b2a18" stroke-width="0.9"/>
<path d="M465.2 353 V370.4 M532.6 353 V370.4" stroke="#2b2a18" stroke-width="1.5" fill="none"/>
<rect x="465" y="362.3" width="74" height="4.4" fill="#ece9b0" stroke="#2b2a18" stroke-width="1.1"/>
<path d="M487 362.3 v4.4 M491 362.3 v4.4 M509 362.3 v4.4 M514 362.3 v4.4" stroke="#2b2a18" stroke-width="0.9"/>
<rect x="596.3" y="353.4" width="244" height="2.9" fill="#bcae6e" stroke="#2b2a18" stroke-width="0.7"/>
<circle cx="840.8" cy="354.8" r="1.9" fill="#3a3420"/>
<rect x="697.6" y="353.2" width="1.8" height="3.3" fill="#2b2a18"/>
<rect x="796.4" y="353.2" width="1.8" height="3.3" fill="#2b2a18"/>
<path d="M598.6 355 V362 M619 352.8 V362" stroke="#2b2a18" stroke-width="1.6" fill="none"/>
<rect x="597.8" y="358" width="21" height="1" fill="#2b2a18"/>
<rect x="565.8" y="362.4" width="54.4" height="6.8" fill="#ebe8ae" stroke="#2b2a18" stroke-width="1.5"/>
<path d="M573.6 362.4 v6.8 M581.3 362.4 v6.8 M589.1 362.4 v6.8 M596.9 362.4 v6.8 M604.6 362.4 v6.8 M612.4 362.4 v6.8" stroke="#2b2a18" stroke-width="1.5"/>
<rect x="619" y="368.6" width="4.5" height="1.2" fill="#2b2a18"/>
<path d="M723.2 352.6 V397.5 M783 352.6 V399" stroke="#2b2a18" stroke-width="2.2" fill="none"/>
<path d="M716 353 V373 M716 357.5 h6 M716 361.5 h6 M716 370 h6" stroke="#2b2a18" stroke-width="1.3" fill="none"/>
<rect x="713.6" y="363" width="69.2" height="4.4" fill="#e6e3a8" stroke="#2b2a18" stroke-width="1.4"/>
<path d="M728.0 363 v4.4 M737.2 363 v4.4 M746.4 363 v4.4 M755.6 363 v4.4 M764.8 363 v4.4 M774.0 363 v4.4" stroke="#2b2a18" stroke-width="2.8"/>
<rect x="713.2" y="393.8" width="70.4" height="4.6" fill="#e6e3a8" stroke="#2b2a18" stroke-width="1.4"/>
<path d="M728.0 393.8 v4.6 M737.2 393.8 v4.6 M746.4 393.8 v4.6 M755.6 393.8 v4.6 M764.8 393.8 v4.6 M774.0 393.8 v4.6" stroke="#2b2a18" stroke-width="2.8"/>
<rect x="708.4" y="374" width="14.2" height="16" fill="url(#bucket)" stroke="#2b2a18" stroke-width="0.9"/>
<rect x="707.6" y="389.6" width="16" height="1.4" fill="#2b2a18"/>
<rect x="784" y="387.6" width="2.6" height="1.2" fill="#2b2a18"/>
<rect x="724" y="380" width="3" height="1.2" fill="#2b2a18"/>
<g filter="url(#speck)">
<path d="M362 420.5 L602 416 L876 437.4 L878 443 L878 450.4 Q835 454.2 760 452 L710 447.5 L575 433 L362 438.3 Z" fill="#f2f0c2"/>
</g>
<path d="M362 420.5 L602 416 L876 437.4 L878 443 Q835 446.6 760.7 444 L710 440.7 L575 427 L362 431 Z" fill="#f6f4c6" opacity="0.45"/>
<path d="M362 420.5 L602 416 L876 437.4" fill="none" stroke="#33331e" stroke-width="1.1" stroke-linejoin="round"/>
<path d="M362 422.8 L602 418.4 L872 441.2" fill="none" stroke="#55553a" stroke-width="0.6" stroke-linejoin="round"/>
<path d="M362 431 L575 427 L710 440.7 L760.7 444 Q835 446.6 878 443" fill="none" stroke="#44442a" stroke-width="0.8" stroke-linejoin="round"/>
<path d="M362 438.3 L575 433 L710 447.5 L760 452 Q835 454.2 878 450.4 L878 443" fill="none" stroke="#33331e" stroke-width="1.1" stroke-linejoin="round"/>
<path d="M760.7 444 L760.3 452 M835 445.6 L835 453.3 M575 427 L575 433" fill="none" stroke="#44442a" stroke-width="0.8" stroke-linejoin="round"/>
<path d="M362 426 L575 422.6" fill="none" stroke="#66664a" stroke-width="0.5" stroke-linejoin="round"/>
<polygon points="401.7,423.7 493.0,422.5 507.7,426.6 427.6,429.3" fill="#34352f" stroke="#1c1c18" stroke-width="0.9" stroke-linejoin="round"/>
<polygon points="414.0,424.6 450.0,424.1 462.0,427.2 432.0,428.2" fill="#6c716c"/>
<polygon points="457.0,424.0 490.0,423.5 499.0,426.2 468.0,427.0" fill="#5a5f5c"/>
<polygon points="620.7,428.9 662.9,426.6 756.0,432.8 697.8,436.5" fill="#33342f" stroke="#1c1c18" stroke-width="0.9" stroke-linejoin="round"/>
<polygon points="636.0,429.0 663.0,427.8 702.0,431.0 672.0,432.8" fill="#7b8082"/>
<polygon points="680.0,433.4 708.0,431.4 742.0,433.2 700.0,435.6" fill="#8d9294"/>
<polygon points="194.9,553.0 214.7,566.0 214.7,587.0 194.9,572.7" fill="#dfe2a6" stroke="#3a4026" stroke-width="0.9" stroke-linejoin="round"/>
<polygon points="214.7,565.8 578.5,540.4 578.5,558.2 214.7,587.0" fill="#d1d297" stroke="#3a4026" stroke-width="0.9" stroke-linejoin="round"/>
<path d="M578.5 540 L710 575.5 L770.9 589 L831.8 591 L871.9 588.5 L871.9 611.6 L831.8 615.4 L770.9 613.4 L710 595.8 L578.5 558.2 Z" fill="#d1d297" stroke="#3a4026" stroke-width="0.9" stroke-linejoin="round"/>
<path d="M770.9 590 V613.4 M831.8 592 V615.4" fill="none" stroke="#3a4026" stroke-width="0.9" stroke-linejoin="round"/>
<polygon points="770.9,590.0 831.8,592.0 831.8,615.4 770.9,613.4" fill="#dfe0a0" opacity="0.6"/>
<polygon points="831.8,591.0 871.9,588.5 871.9,611.6 831.8,615.4" fill="#cccb90" stroke="#3a4026" stroke-width="0.9" stroke-linejoin="round"/>
<polygon points="363.4,440.0 574.0,434.0 574.0,541.0 363.4,555.5" fill="#36422a"/>
<polygon points="577.4,434.0 710.0,448.2 760.0,452.6 835.0,454.0 877.0,452.0 877.0,588.5 843.0,591.2 800.0,592.8 750.6,586.8 577.4,540.6" fill="#36422a"/>
<g filter="url(#grain)">
<polygon points="363.6,440.6 428.6,439.2 428.6,550.7 363.6,555.3" fill="#73865c"/>
<polygon points="374.4,452.5 419.3,451.5 419.3,540.7 374.4,543.7" fill="#82966a"/>
<polygon points="375.9,454.0 417.8,453.0 417.8,539.2 375.9,542.2" fill="#6c834b"/>
<polygon points="378.1,456.2 415.6,455.2 415.6,537.0 378.1,540.0" fill="#6a8149"/>
</g>
<polygon points="363.6,440.6 428.6,439.2 428.6,550.7 363.6,555.3" fill="none" stroke="#333f26" stroke-width="1.1" stroke-linejoin="round"/>
<polygon points="365.3,442.3 426.9,440.9 426.9,549.0 365.3,553.6" fill="none" stroke="#9cad84" stroke-width="0.9" stroke-linejoin="round" opacity="0.75"/>
<polygon points="374.2,452.3 419.5,451.3 419.5,540.9 374.2,543.9" fill="none" stroke="#4f6338" stroke-width="0.8" stroke-linejoin="round"/>
<polygon points="375.7,453.8 418.0,452.8 418.0,539.4 375.7,542.4" fill="none" stroke="#b2be9c" stroke-width="1.4" stroke-linejoin="round"/>
<polygon points="378.1,456.2 415.6,455.2 415.6,537.0 378.1,540.0" fill="none" stroke="#8aa463" stroke-width="0.6" stroke-linejoin="round"/>
<polygon points="378.1,456.2 415.6,455.2 414.4,457.2 379.3,458.2" fill="#b2c09c" opacity="0.7"/>
<path d="M391.9 459.5 q5.0 3.4 10.0 0" fill="none" stroke="#c6d1b2" stroke-width="0.9" opacity="0.85"/>
<path d="M392.9 535.9 h8.0" fill="none" stroke="#cbd6b8" stroke-width="1.2" stroke-dasharray="1.2 0.8" opacity="0.85"/>
<circle cx="424.7" cy="447.4" r="2.7" fill="#241f15" stroke="#100e09" stroke-width="0.7"/><circle cx="425.0" cy="447.5" r="1.1" fill="#c2bba4"/>
<polygon points="430.3,436.8 514.6,435.2 514.6,544.6 430.3,550.0" fill="#6d7270" stroke="#2a2d2a" stroke-width="1" stroke-linejoin="round"/>
<polygon points="431.0,437.4 514.0,435.9 514.0,456.8 431.0,458.0" fill="url(#steelh)"/>
<polygon points="431.0,459.4 514.0,458.2 514.0,528.6 431.0,532.4" fill="url(#steelv)"/>
<line x1="431.0" y1="458.8" x2="514.0" y2="457.6" stroke="#3c403e" stroke-width="1.3"/>
<line x1="431.0" y1="461.2" x2="514.0" y2="460.0" stroke="#eef0ee" stroke-width="1.0"/>
<polygon points="443.0,471.4 502.6,470.6 502.6,511.0 443.0,512.0" fill="url(#glass)" stroke="#1d2422" stroke-width="1.4" stroke-linejoin="round"/>
<path d="M452 476.5 L496 475.8 M452 478.4 L496 477.6" fill="none" stroke="#a8d8c8" stroke-width="0.7" stroke-linejoin="round" opacity="0.8"/>
<path d="M447 487 L499 486.2 M447 497 L499 496 " fill="none" stroke="#0c2c26" stroke-width="1.0" stroke-linejoin="round" opacity="0.7"/>
<rect x="443.4" y="444" width="12.4" height="3.6" fill="#3f6a78"/>
<path d="M443.6 451.2 h12" stroke="#2a2a2a" stroke-width="1.2" stroke-dasharray="1.6 0.8"/>
<circle cx="488.5" cy="446.4" r="3.5" fill="#1f1f1f"/><circle cx="498" cy="446.2" r="3.5" fill="#1f1f1f"/>
<circle cx="488" cy="445.8" r="1.2" fill="#555"/><circle cx="497.5" cy="445.6" r="1.2" fill="#555"/>
<polygon points="431.3,532.8 514.2,529.0 514.2,544.6 431.3,550.0" fill="#788c5e" stroke="#2e3a22" stroke-width="1" stroke-linejoin="round"/>
<polygon points="433.0,535.0 512.4,531.4 512.4,542.6 433.0,547.6" fill="none" stroke="#a3b286" stroke-width="0.8" stroke-linejoin="round" opacity="0.8"/>
<circle cx="473.9" cy="538.2" r="2.7" fill="#241f15" stroke="#100e09" stroke-width="0.7"/><circle cx="474.2" cy="538.3" r="1.1" fill="#c2bba4"/>
<g filter="url(#grain)">
<polygon points="515.6,435.8 573.7,434.4 573.7,540.6 515.6,544.0" fill="#73865c"/>
<polygon points="525.3,447.3 563.9,446.3 563.9,531.5 525.3,534.1" fill="#82966a"/>
<polygon points="526.8,448.8 562.4,447.8 562.4,530.0 526.8,532.6" fill="#6c834b"/>
<polygon points="529.0,451.0 560.2,450.0 560.2,527.8 529.0,530.4" fill="#6a8149"/>
</g>
<polygon points="515.6,435.8 573.7,434.4 573.7,540.6 515.6,544.0" fill="none" stroke="#333f26" stroke-width="1.1" stroke-linejoin="round"/>
<polygon points="517.3,437.5 572.0,436.1 572.0,538.9 517.3,542.3" fill="none" stroke="#9cad84" stroke-width="0.9" stroke-linejoin="round" opacity="0.75"/>
<polygon points="525.1,447.1 564.1,446.1 564.1,531.7 525.1,534.3" fill="none" stroke="#4f6338" stroke-width="0.8" stroke-linejoin="round"/>
<polygon points="526.6,448.6 562.6,447.6 562.6,530.2 526.6,532.8" fill="none" stroke="#b2be9c" stroke-width="1.4" stroke-linejoin="round"/>
<polygon points="529.0,451.0 560.2,450.0 560.2,527.8 529.0,530.4" fill="none" stroke="#8aa463" stroke-width="0.6" stroke-linejoin="round"/>
<polygon points="529.0,451.0 560.2,450.0 559.0,452.0 530.2,453.0" fill="#b2c09c" opacity="0.7"/>
<path d="M540.0 454.3 q4.6 3.4 9.1 0" fill="none" stroke="#c6d1b2" stroke-width="0.9" opacity="0.85"/>
<path d="M541.0 526.5 h7.3" fill="none" stroke="#cbd6b8" stroke-width="1.2" stroke-dasharray="1.2 0.8" opacity="0.85"/>
<circle cx="521.2" cy="444.2" r="2.7" fill="#241f15" stroke="#100e09" stroke-width="0.7"/><circle cx="521.5" cy="444.3" r="1.1" fill="#c2bba4"/>
<polygon points="573.9,433.2 577.2,433.4 577.2,541.0 573.9,540.6" fill="#d9d79a" stroke="#5a5a34" stroke-width="0.6" stroke-linejoin="round"/>
<g filter="url(#grain)">
<polygon points="577.4,433.8 609.5,437.2 609.5,547.8 577.4,540.6" fill="#73865c"/>
<polygon points="582.1,447.1 605.5,449.7 605.5,536.5 582.1,529.8" fill="#82966a"/>
<polygon points="583.6,448.6 604.0,451.2 604.0,535.0 583.6,528.3" fill="#6c834b"/>
<polygon points="585.8,450.8 601.8,453.4 601.8,532.8 585.8,526.1" fill="#6a8149"/>
</g>
<polygon points="577.4,433.8 609.5,437.2 609.5,547.8 577.4,540.6" fill="none" stroke="#333f26" stroke-width="1.1" stroke-linejoin="round"/>
<polygon points="579.1,435.5 607.8,438.9 607.8,546.1 579.1,538.9" fill="none" stroke="#9cad84" stroke-width="0.9" stroke-linejoin="round" opacity="0.75"/>
<polygon points="581.9,446.9 605.7,449.5 605.7,536.7 581.9,530.0" fill="none" stroke="#4f6338" stroke-width="0.8" stroke-linejoin="round"/>
<polygon points="583.4,448.4 604.2,451.0 604.2,535.2 583.4,528.5" fill="none" stroke="#b2be9c" stroke-width="1.4" stroke-linejoin="round"/>
<polygon points="585.8,450.8 601.8,453.4 601.8,532.8 585.8,526.1" fill="none" stroke="#8aa463" stroke-width="0.6" stroke-linejoin="round"/>
<polygon points="585.8,450.8 601.8,453.4 600.6,455.4 587.0,452.8" fill="#b2c09c" opacity="0.7"/>
<path d="M591.1 455.9 q2.7 3.4 5.5 0" fill="none" stroke="#c6d1b2" stroke-width="0.9" opacity="0.85"/>
<path d="M591.6 526.9 h4.4" fill="none" stroke="#cbd6b8" stroke-width="1.2" stroke-dasharray="1.2 0.8" opacity="0.85"/>
<circle cx="604.3" cy="445.5" r="2.7" fill="#241f15" stroke="#100e09" stroke-width="0.7"/><circle cx="604.6" cy="445.6" r="1.1" fill="#c2bba4"/>
<g filter="url(#grain)">
<polygon points="611.0,437.9 650.1,441.7 650.1,559.0 611.0,548.5" fill="#73865c"/>
<polygon points="616.7,452.7 645.3,456.1 645.3,547.7 616.7,540.1" fill="#82966a"/>
<polygon points="618.2,454.2 643.8,457.6 643.8,546.2 618.2,538.6" fill="#6c834b"/>
<polygon points="620.4,456.4 641.6,459.8 641.6,544.0 620.4,536.4" fill="#6a8149"/>
</g>
<polygon points="611.0,437.9 650.1,441.7 650.1,559.0 611.0,548.5" fill="none" stroke="#333f26" stroke-width="1.1" stroke-linejoin="round"/>
<polygon points="612.7,439.6 648.4,443.4 648.4,557.3 612.7,546.8" fill="none" stroke="#9cad84" stroke-width="0.9" stroke-linejoin="round" opacity="0.75"/>
<polygon points="616.5,452.5 645.5,455.9 645.5,547.9 616.5,540.3" fill="none" stroke="#4f6338" stroke-width="0.8" stroke-linejoin="round"/>
<polygon points="618.0,454.0 644.0,457.4 644.0,546.4 618.0,538.8" fill="none" stroke="#b2be9c" stroke-width="1.4" stroke-linejoin="round"/>
<polygon points="620.4,456.4 641.6,459.8 641.6,544.0 620.4,536.4" fill="none" stroke="#8aa463" stroke-width="0.6" stroke-linejoin="round"/>
<polygon points="620.4,456.4 641.6,459.8 640.4,461.8 621.6,458.4" fill="#b2c09c" opacity="0.7"/>
<path d="M627.6 461.9 q3.4 3.4 6.7 0" fill="none" stroke="#c6d1b2" stroke-width="0.9" opacity="0.85"/>
<path d="M628.3 537.6 h5.4" fill="none" stroke="#cbd6b8" stroke-width="1.2" stroke-dasharray="1.2 0.8" opacity="0.85"/>
<circle cx="644.8" cy="450.7" r="2.7" fill="#241f15" stroke="#100e09" stroke-width="0.7"/><circle cx="645.1" cy="450.8" r="1.1" fill="#c2bba4"/>
<g filter="url(#grain)">
<polygon points="651.8,442.4 696.3,446.9 696.3,571.7 651.8,559.8" fill="#73865c"/>
<polygon points="659.1,457.2 689.5,460.6 689.5,558.5 659.1,549.5" fill="#82966a"/>
<polygon points="660.6,458.7 688.0,462.1 688.0,557.0 660.6,548.0" fill="#6c834b"/>
<polygon points="662.8,460.9 685.8,464.3 685.8,554.8 662.8,545.8" fill="#6a8149"/>
</g>
<polygon points="651.8,442.4 696.3,446.9 696.3,571.7 651.8,559.8" fill="none" stroke="#333f26" stroke-width="1.1" stroke-linejoin="round"/>
<polygon points="653.5,444.1 694.6,448.6 694.6,570.0 653.5,558.1" fill="none" stroke="#9cad84" stroke-width="0.9" stroke-linejoin="round" opacity="0.75"/>
<polygon points="658.9,457.0 689.7,460.4 689.7,558.7 658.9,549.7" fill="none" stroke="#4f6338" stroke-width="0.8" stroke-linejoin="round"/>
<polygon points="660.4,458.5 688.2,461.9 688.2,557.2 660.4,548.2" fill="none" stroke="#b2be9c" stroke-width="1.4" stroke-linejoin="round"/>
<polygon points="662.8,460.9 685.8,464.3 685.8,554.8 662.8,545.8" fill="none" stroke="#8aa463" stroke-width="0.6" stroke-linejoin="round"/>
<polygon points="662.8,460.9 685.8,464.3 684.6,466.3 664.0,462.9" fill="#b2c09c" opacity="0.7"/>
<path d="M670.7 466.4 q3.6 3.4 7.2 0" fill="none" stroke="#c6d1b2" stroke-width="0.9" opacity="0.85"/>
<path d="M671.4 547.7 h5.7" fill="none" stroke="#cbd6b8" stroke-width="1.2" stroke-dasharray="1.2 0.8" opacity="0.85"/>
<circle cx="653.6" cy="451.9" r="2.7" fill="#241f15" stroke="#100e09" stroke-width="0.7"/><circle cx="653.9" cy="452.0" r="1.1" fill="#c2bba4"/>
<g filter="url(#grain)">
<polygon points="697.9,447.4 748.6,452.0 748.6,517.6 697.9,509.2" fill="#73865c"/>
<polygon points="706.2,461.2 739.9,464.5 739.9,504.3 706.2,499.5" fill="#82966a"/>
<polygon points="707.7,462.7 738.4,466.0 738.4,502.8 707.7,498.0" fill="#6c834b"/>
<polygon points="709.9,464.9 736.2,468.2 736.2,500.6 709.9,495.8" fill="#6a8149"/>
</g>
<polygon points="697.9,447.4 748.6,452.0 748.6,517.6 697.9,509.2" fill="none" stroke="#333f26" stroke-width="1.1" stroke-linejoin="round"/>
<polygon points="699.6,449.1 746.9,453.7 746.9,515.9 699.6,507.5" fill="none" stroke="#9cad84" stroke-width="0.9" stroke-linejoin="round" opacity="0.75"/>
<polygon points="706.0,461.0 740.1,464.3 740.1,504.5 706.0,499.7" fill="none" stroke="#4f6338" stroke-width="0.8" stroke-linejoin="round"/>
<polygon points="707.5,462.5 738.6,465.8 738.6,503.0 707.5,498.2" fill="none" stroke="#b2be9c" stroke-width="1.4" stroke-linejoin="round"/>
<polygon points="709.9,464.9 736.2,468.2 736.2,500.6 709.9,495.8" fill="none" stroke="#8aa463" stroke-width="0.6" stroke-linejoin="round"/>
<polygon points="709.9,464.9 736.2,468.2 735.0,470.2 711.1,466.9" fill="#b2c09c" opacity="0.7"/>
<path d="M719.1 470.3 q4.0 3.4 7.9 0" fill="none" stroke="#c6d1b2" stroke-width="0.9" opacity="0.85"/>
<path d="M719.9 495.6 h6.4" fill="none" stroke="#cbd6b8" stroke-width="1.2" stroke-dasharray="1.2 0.8" opacity="0.85"/>
<circle cx="721.0" cy="456.0" r="2.7" fill="#241f15" stroke="#100e09" stroke-width="0.7"/><circle cx="721.3" cy="456.1" r="1.1" fill="#c2bba4"/>
<g filter="url(#grain)">
<polygon points="697.9,511.5 748.6,519.8 748.6,585.2 697.9,572.6" fill="#73865c"/>
<polygon points="706.3,526.3 740.3,532.4 740.3,572.3 706.3,562.3" fill="#82966a"/>
<polygon points="707.8,527.8 738.8,533.9 738.8,570.8 707.8,560.8" fill="#6c834b"/>
<polygon points="710.0,530.0 736.6,536.1 736.6,568.6 710.0,558.6" fill="#6a8149"/>
</g>
<polygon points="697.9,511.5 748.6,519.8 748.6,585.2 697.9,572.6" fill="none" stroke="#333f26" stroke-width="1.1" stroke-linejoin="round"/>
<polygon points="699.6,513.2 746.9,521.5 746.9,583.5 699.6,570.9" fill="none" stroke="#9cad84" stroke-width="0.9" stroke-linejoin="round" opacity="0.75"/>
<polygon points="706.1,526.1 740.5,532.2 740.5,572.5 706.1,562.5" fill="none" stroke="#4f6338" stroke-width="0.8" stroke-linejoin="round"/>
<polygon points="707.6,527.6 739.0,533.7 739.0,571.0 707.6,561.0" fill="none" stroke="#b2be9c" stroke-width="1.4" stroke-linejoin="round"/>
<polygon points="710.0,530.0 736.6,536.1 736.6,568.6 710.0,558.6" fill="none" stroke="#8aa463" stroke-width="0.6" stroke-linejoin="round"/>
<polygon points="710.0,530.0 736.6,536.1 735.4,538.1 711.2,532.0" fill="#b2c09c" opacity="0.7"/>
<path d="M719.3 536.9 q4.0 3.4 8.0 0" fill="none" stroke="#c6d1b2" stroke-width="0.9" opacity="0.85"/>
<path d="M720.1 561.0 h6.4" fill="none" stroke="#cbd6b8" stroke-width="1.2" stroke-dasharray="1.2 0.8" opacity="0.85"/>
<circle cx="721.0" cy="521.8" r="2.7" fill="#241f15" stroke="#100e09" stroke-width="0.7"/><circle cx="721.3" cy="521.9" r="1.1" fill="#c2bba4"/>
<g filter="url(#grain)">
<path d="M750.6 453.1 Q800 457.6 843 455 L843 591.3 Q800 594.6 750.6 586.8 Z" fill="#73865c" stroke="#2e3a22" stroke-width="1.2" stroke-linejoin="round"/>
<path d="M752.2 454.8 Q800 459.2 841.4 456.6 L841.4 589.7 Q800 592.9 752.2 585 Z" fill="none" stroke="#a3b286" stroke-width="0.9" stroke-linejoin="round" opacity="0.75"/>
<path d="M762 468.6 Q797 470.8 828.8 469.2 L828.8 579.2 Q797 583 762 575.4 Z" fill="#82966a" stroke="#53663c" stroke-width="0.7" stroke-linejoin="round"/>
<path d="M763.5 470 Q797 472.2 827.3 470.6 L827.3 577.8 Q797 581.6 763.5 574 Z" fill="#6c834b" stroke="#b9c5a0" stroke-width="1.1" stroke-linejoin="round"/>
<path d="M765.8 472.4 Q797 474.6 825 473 L825 575.4 Q797 579.2 765.8 571.6 Z" fill="#6a8149" stroke="#869a62" stroke-width="0.6" stroke-linejoin="round"/>
<path d="M790 477 q6 4 12 0" fill="none" stroke="#c3cfae" stroke-width="0.9" opacity="0.85"/>
<path d="M790 571.5 h12" fill="none" stroke="#c9d4b4" stroke-width="1.2" stroke-dasharray="1.2 0.8" opacity="0.85"/>
</g>
<circle cx="754.0" cy="463.7" r="2.7" fill="#241f15" stroke="#100e09" stroke-width="0.7"/><circle cx="754.3" cy="463.8" r="1.1" fill="#c2bba4"/>
<g filter="url(#grain)">
<polygon points="844.2,454.6 876.9,452.7 876.9,588.4 844.2,591.3" fill="#73865c"/>
<polygon points="852.9,468.6 870.1,467.7 870.1,577.0 852.9,578.8" fill="#82966a"/>
<polygon points="854.4,470.1 868.6,469.2 868.6,575.5 854.4,577.3" fill="#6c834b"/>
<polygon points="856.6,472.3 866.4,471.4 866.4,573.3 856.6,575.1" fill="#6a8149"/>
</g>
<polygon points="844.2,454.6 876.9,452.7 876.9,588.4 844.2,591.3" fill="none" stroke="#333f26" stroke-width="1.1" stroke-linejoin="round"/>
<polygon points="845.9,456.3 875.2,454.4 875.2,586.7 845.9,589.6" fill="none" stroke="#9cad84" stroke-width="0.9" stroke-linejoin="round" opacity="0.75"/>
<polygon points="852.7,468.4 870.3,467.5 870.3,577.2 852.7,579.0" fill="none" stroke="#4f6338" stroke-width="0.8" stroke-linejoin="round"/>
<polygon points="854.2,469.9 868.8,469.0 868.8,575.7 854.2,577.5" fill="none" stroke="#b2be9c" stroke-width="1.4" stroke-linejoin="round"/>
<polygon points="856.6,472.3 866.4,471.4 866.4,573.3 856.6,575.1" fill="none" stroke="#8aa463" stroke-width="0.6" stroke-linejoin="round"/>
<polygon points="856.6,472.3 866.4,471.4 865.2,473.4 857.8,474.3" fill="#b2c09c" opacity="0.7"/>
<path d="M859.5 475.6 q2.0 3.4 4.0 0" fill="none" stroke="#c6d1b2" stroke-width="0.9" opacity="0.85"/>
<path d="M859.9 571.6 h3.2" fill="none" stroke="#cbd6b8" stroke-width="1.2" stroke-dasharray="1.2 0.8" opacity="0.85"/>
<line x1="877.2" y1="452.0" x2="877.2" y2="588.6" stroke="#39452a" stroke-width="1.3"/></svg>
<div class="abs menubar">
<span style="left:3.8px">Файл</span>
<span style="left:30.0px">Правка</span>
<span style="left:65.7px">Вид</span>
<span style="left:87.7px">Элемент</span>
<span style="left:126.6px">Инструменты</span>
<span style="left:183.7px">Справка</span>
</div>
<div class="abs tbarea"></div><div class="abs tb1"></div><div class="abs tb2"></div>
<svg class="abs" style="left:0;top:0" width="910" height="56" viewBox="0 0 910 56"><path d="M3.5 13.7 v15" stroke="#c0c0c0" stroke-width="2" stroke-dasharray="1 1.6"/>
<path d="M3.5 36.7 v15" stroke="#c0c0c0" stroke-width="2" stroke-dasharray="1 1.6"/>
<rect x="276.0" y="12.2" width="16.0" height="18" rx="2" fill="#e4e4e4" stroke="#8a8a8a" stroke-width="0.9"/>
<rect x="460.0" y="12.2" width="18.0" height="18" rx="2" fill="#e4e4e4" stroke="#8a8a8a" stroke-width="0.9"/>
<rect x="482.0" y="12.2" width="16.0" height="18" rx="2" fill="#e4e4e4" stroke="#8a8a8a" stroke-width="0.9"/>
<rect x="538.0" y="12.2" width="16.0" height="18" rx="2" fill="#e4e4e4" stroke="#8a8a8a" stroke-width="0.9"/>
<rect x="593.0" y="12.2" width="16.0" height="18" rx="2" fill="#e4e4e4" stroke="#8a8a8a" stroke-width="0.9"/>
<rect x="632.0" y="12.2" width="15.0" height="18" rx="2" fill="#e4e4e4" stroke="#8a8a8a" stroke-width="0.9"/>
<rect x="7.0" y="35.2" width="17.0" height="18" rx="2" fill="#e4e4e4" stroke="#8a8a8a" stroke-width="0.9"/>
<g transform="translate(9.60 15.80) scale(0.9)"><path d="M2.5 0.8h5l2.3 2.3v8.3h-7.3z" fill="#fff" stroke="#222" stroke-width="0.9"/><path d="M7.5 0.8v2.3h2.3" fill="none" stroke="#222" stroke-width="0.7"/></g>
<g transform="translate(26.60 15.80) scale(0.9)"><path d="M0.8 3h4l1 1.2h4v6.6h-9z" fill="#c8b400" stroke="#3a3400" stroke-width="0.8"/><path d="M0.8 10.8l2-4.6h9l-2.4 4.6z" fill="#f2e24a" stroke="#3a3400" stroke-width="0.8"/><path d="M8 1.2q2-1 3 1" fill="none" stroke="#222" stroke-width="0.8"/></g>
<g transform="translate(43.60 15.80) scale(0.9)"><rect x="1" y="1" width="10.4" height="10.4" fill="#4a4a10" stroke="#111" stroke-width="0.9"/><rect x="3" y="1.4" width="6.2" height="4" fill="#d8d8c0"/><rect x="3.4" y="7.4" width="5.6" height="3.8" fill="#111"/></g>
<g transform="translate(65.60 15.80) scale(0.9)"><path d="M1.5 1h5.5l2 2v8h-7.5z" fill="#fff" stroke="#333" stroke-width="0.8"/><path d="M3 4h4M3 6h3" stroke="#666" stroke-width="0.7"/><path d="M5 8.6l1.8 1.8l4.2-5" fill="none" stroke="#555" stroke-width="1.6"/><path d="M5 8.6l1.8 1.8l4.2-5" fill="none" stroke="#e8e8e8" stroke-width="0.6"/></g>
<g transform="translate(86.60 15.80) scale(0.9)"><path d="M3 1h6l0.8 3.4h-7.4z" fill="#fff" stroke="#222" stroke-width="0.8"/><rect x="0.8" y="4.4" width="10.6" height="4.6" rx="1" fill="#555" stroke="#111" stroke-width="0.8"/><rect x="2.4" y="8" width="7.4" height="3" fill="#ddd" stroke="#111" stroke-width="0.7"/></g>
<g transform="translate(103.60 15.80) scale(0.9)"><path d="M1.5 0.8h5l2.3 2.3v8.3h-7.3z" fill="#fff" stroke="#222" stroke-width="0.9"/><circle cx="7" cy="7" r="2.6" fill="#bfe6e0" stroke="#1a5a50" stroke-width="1"/><path d="M9 9l2.6 2.6" stroke="#222" stroke-width="1.5"/></g>
<g transform="translate(124.60 15.80) scale(0.9)"><path d="M1.5 1.5l9 9M10.5 1.5l-9 9" stroke="#9c9c9c" stroke-width="1.1"/></g>
<g transform="translate(142.60 15.80) scale(0.9)"><path d="M4 1l3.4 7M8 1l-3.4 7" stroke="#9c9c9c" stroke-width="0.9" fill="none"/><circle cx="4" cy="9.6" r="1.5" fill="none" stroke="#9c9c9c" stroke-width="0.9"/><circle cx="8" cy="9.6" r="1.5" fill="none" stroke="#9c9c9c" stroke-width="0.9"/></g>
<g transform="translate(158.60 15.80) scale(0.9)"><rect x="1" y="1" width="6" height="7" fill="#e6e6e6" stroke="#9c9c9c" stroke-width="0.9"/><rect x="5" y="4" width="6" height="7" fill="#e6e6e6" stroke="#9c9c9c" stroke-width="0.9"/></g>
<g transform="translate(175.60 15.80) scale(0.9)"><rect x="1" y="1.6" width="8" height="9" fill="#bdbdbd" stroke="#9c9c9c" stroke-width="0.9"/><rect x="3.2" y="0.6" width="3.6" height="2" fill="#e6e6e6" stroke="#9c9c9c" stroke-width="0.7"/><rect x="5.4" y="5" width="6" height="6.4" fill="#e8e8e8" stroke="#9c9c9c" stroke-width="0.9"/></g>
<g transform="translate(197.60 15.80) scale(0.9)"><path d="M2 5.5q4-4 7.5 0q1.5 3-2.5 4.500" fill="none" stroke="#9c9c9c" stroke-width="1.1"/><path d="M1.4 2.6v3.6h3.6" fill="none" stroke="#9c9c9c" stroke-width="1.1"/></g>
<g transform="translate(214.60 15.80) scale(0.9)"><path d="M10 5.5q-4-4-7.500 0q-1.500 3 2.500 4.500" fill="none" stroke="#9c9c9c" stroke-width="1.1"/><path d="M10.600 2.600v3.600h-3.600" fill="none" stroke="#9c9c9c" stroke-width="1.1"/></g>
<g transform="translate(234.10 15.80) scale(0.9)"><rect x="1" y="4" width="8" height="7" fill="#e2e2e2" stroke="#9c9c9c" stroke-width="0.9"/><path d="M2.600 6h4.500M2.600 8h4.500" stroke="#9c9c9c" stroke-width="0.7"/><path d="M5.500 3.500l2-2.500h3.500v3l-2 2" fill="#e2e2e2" stroke="#9c9c9c" stroke-width="0.9"/></g>
<g transform="translate(256.60 15.80) scale(0.9)"><rect x="0.6" y="1.2" width="10.8" height="9.400" fill="#fff" stroke="#222" stroke-width="0.9"/><rect x="1" y="1.600" width="10" height="1.800" fill="#1c3c8c"/><path d="M2.400 5.400l0.900 0.900l1.500-1.700M2.400 8l0.900 0.900l1.500-1.700" fill="none" stroke="#111" stroke-width="0.9"/><path d="M6 5.600h3.500M6 8.200h3.500" stroke="#444" stroke-width="0.7"/></g>
<g transform="translate(278.60 15.80) scale(0.9)"><rect x="0.6" y="1.2" width="10.8" height="9.400" fill="#fff" stroke="#222" stroke-width="0.9"/><rect x="1" y="1.600" width="10" height="1.800" fill="#1c3c8c"/><rect x="5" y="4.400" width="6.400" height="7" fill="#3fb3a6" stroke="#0c5a52" stroke-width="0.8"/><path d="M5 6.600h6.400M5 8.800h6.400M8.200 4.400v7" stroke="#0c5a52" stroke-width="0.6"/></g>
<g transform="translate(296.60 15.80) scale(0.9)"><rect x="0.6" y="1.2" width="10.8" height="9.400" fill="#fff" stroke="#222" stroke-width="0.9"/><rect x="1" y="1.600" width="10" height="1.800" fill="#1c3c8c"/><rect x="4.400" y="5" width="5" height="4" fill="#cfd8e8" stroke="#333" stroke-width="0.7"/><path d="M8.600 8.600l2.800 2.800" stroke="#111" stroke-width="1.400"/></g>
<g transform="translate(312.60 15.80) scale(0.9)"><rect x="0.6" y="1.2" width="10.8" height="9.400" fill="#fff" stroke="#222" stroke-width="0.9"/><rect x="1" y="1.600" width="10" height="1.800" fill="#1c3c8c"/><path d="M6 4.500v7M6 6.500h3M6 9h3" stroke="#111" stroke-width="0.9" fill="none"/><rect x="8.500" y="5.400" width="2.400" height="2" fill="#3a8a3a"/><rect x="8.500" y="8" width="2.400" height="2.600" fill="#555"/></g>
<g transform="translate(329.60 15.80) scale(0.9)"><rect x="0.6" y="1.2" width="10.8" height="9.400" fill="#fff" stroke="#222" stroke-width="0.9"/><rect x="1" y="1.600" width="10" height="1.800" fill="#1c3c8c"/><path d="M1.800 7.500h8.400M1.800 7.500l2-1.800M1.800 7.500l2 1.800M10.200 7.500l-2-1.800M10.200 7.500l-2 1.800" stroke="#111" stroke-width="1.100" fill="none"/></g>
<g transform="translate(346.60 15.80) scale(0.9)"><rect x="0.6" y="1.2" width="10.8" height="9.400" fill="#fff" stroke="#222" stroke-width="0.9"/><rect x="1" y="1.600" width="10" height="1.800" fill="#1c3c8c"/><circle cx="6" cy="7" r="2.300" fill="#f6e23a" stroke="#6a5a00" stroke-width="0.6"/><rect x="5" y="9.200" width="2" height="2.200" fill="#333"/></g>
<g transform="translate(362.60 15.80) scale(0.9)"><rect x="0.6" y="1.2" width="10.8" height="9.400" fill="#fff" stroke="#222" stroke-width="0.9"/><rect x="1" y="1.600" width="10" height="1.800" fill="#1c3c8c"/><circle cx="8.200" cy="8.200" r="3.200" fill="#c8d020" stroke="#444a00" stroke-width="0.8"/><path d="M8.200 6.400v3.600" stroke="#333" stroke-width="0.9"/></g>
<g transform="translate(384.60 15.80) scale(0.9)"><path d="M10 2.800v-1.600h-8l4 4.800l-4 4.800h8v-1.600" fill="none" stroke="#111" stroke-width="1.300"/></g>
<g transform="translate(411.60 15.80) scale(0.9)"><path d="M1.500 4l3-3h6v6.500l-3 3h-6z" fill="#fff" stroke="#111" stroke-width="0.9" stroke-linejoin="round"/><path d="M1.500 4l3-3h6l-3 3z" fill="#fff" stroke="#111" stroke-width="0.9" stroke-linejoin="round"/><path d="M7.500 4l3-3v6.500l-3 3z" fill="#fff" stroke="#111" stroke-width="0.9" stroke-linejoin="round"/><path d="M4.500 1v6.500h6M4.500 7.500l-3 3" fill="none" stroke="#111" stroke-width="0.6"/></g>
<g transform="translate(427.60 15.80) scale(0.9)"><path d="M1.500 4l3-3h6v6.500l-3 3h-6z" fill="#fff" stroke="#111" stroke-width="0.9" stroke-linejoin="round"/><path d="M1.500 4l3-3h6l-3 3z" fill="#fff" stroke="#111" stroke-width="0.9" stroke-linejoin="round"/><path d="M7.500 4l3-3v6.500l-3 3z" fill="#fff" stroke="#111" stroke-width="0.9" stroke-linejoin="round"/></g>
<g transform="translate(444.60 15.80) scale(0.9)"><path d="M1.500 4l3-3h6v6.500l-3 3h-6z" fill="#22b8b0" stroke="#0a5a56" stroke-width="0.9" stroke-linejoin="round"/><path d="M1.500 4l3-3h6l-3 3z" fill="#6fe0d8" stroke="#0a5a56" stroke-width="0.9" stroke-linejoin="round"/><path d="M7.500 4l3-3v6.500l-3 3z" fill="#128a84" stroke="#0a5a56" stroke-width="0.9" stroke-linejoin="round"/></g>
<g transform="translate(463.60 15.80) scale(0.9)"><path d="M1.500 4l3-3h6v6.500l-3 3h-6z" fill="#22b8b0" stroke="#111" stroke-width="0.9" stroke-linejoin="round"/><path d="M1.500 4l3-3h6l-3 3z" fill="#6fe0d8" stroke="#111" stroke-width="0.9" stroke-linejoin="round"/><path d="M7.500 4l3-3v6.500l-3 3z" fill="#128a84" stroke="#111" stroke-width="0.9" stroke-linejoin="round"/><path d="M4.500 1v6.500h6M4.500 7.500l-3 3" fill="none" stroke="#111" stroke-width="0.6"/></g>
<g transform="translate(484.60 15.80) scale(0.9)"><path d="M1.500 4l3-3h6v6.500l-3 3h-6z" fill="#fff" stroke="#111" stroke-width="0.9" stroke-linejoin="round"/><path d="M1.500 4l3-3h6l-3 3z" fill="#fff" stroke="#111" stroke-width="0.9" stroke-linejoin="round"/><path d="M7.500 4l3-3v6.500l-3 3z" fill="#fff" stroke="#111" stroke-width="0.9" stroke-linejoin="round"/></g>
<g transform="translate(501.60 15.80) scale(0.9)"><g transform="translate(1 1) scale(0.85)"><path d="M1.500 4l3-3h6v6.500l-3 3h-6z" fill="#fff" stroke="#111" stroke-width="0.9" stroke-linejoin="round"/><path d="M1.500 4l3-3h6l-3 3z" fill="#fff" stroke="#111" stroke-width="0.9" stroke-linejoin="round"/><path d="M7.500 4l3-3v6.500l-3 3z" fill="#fff" stroke="#111" stroke-width="0.9" stroke-linejoin="round"/><path d="M4.500 1v6.500h6M4.500 7.500l-3 3" fill="none" stroke="#111" stroke-width="0.6"/></g></g>
<g transform="translate(517.60 15.80) scale(0.9)"><path d="M1.500 4l3-3h6v6.500l-3 3h-6z" fill="#18a8a0" stroke="#18a8a0" stroke-width="0.4" stroke-linejoin="round"/><path d="M1.500 4l3-3h6l-3 3z" fill="#58d8d0" stroke="#18a8a0" stroke-width="0.4" stroke-linejoin="round"/><path d="M7.500 4l3-3v6.500l-3 3z" fill="#0c807a" stroke="#18a8a0" stroke-width="0.4" stroke-linejoin="round"/></g>
<g transform="translate(540.60 15.80) scale(0.9)"><text x="1.600" y="7.200" font-family="Liberation Sans, sans-serif" font-size="4.600" font-weight="700" fill="#111">a</text><text x="5.200" y="9" font-family="Liberation Sans, sans-serif" font-size="7" font-weight="700" fill="#111">a</text></g>
<g transform="translate(557.60 15.80) scale(0.9)"><path d="M6 0.800a3.600 3.600 0 0 1 2 6.600v1.400h-4v-1.400a3.600 3.600 0 0 1 2-6.600z" fill="#f8ee50" stroke="#5a5200" stroke-width="0.800"/><rect x="4.600" y="8.800" width="2.800" height="2.600" fill="#222"/></g>
<g transform="translate(578.60 15.80) scale(0.9)"><path d="M2 3q2-2 4-0.500l2 1q2 0 2.500 2l-3 4.500l-3-1l-2.500-3.500z" fill="#f4f4f4" stroke="#222" stroke-width="0.900"/><path d="M3 2.500q3-2 6 0" fill="none" stroke="#222" stroke-width="0.800"/></g>
<g transform="translate(595.60 15.80) scale(0.9)"><path d="M1 2.500v7M11 2.500v7M1.500 6h9M1.500 6l2-1.600M1.500 6l2 1.600M10.500 6l-2-1.600M10.500 6l-2 1.600" stroke="#222" stroke-width="0.900" fill="none"/></g>
<g transform="translate(612.60 15.80) scale(0.9)"><path d="M1 1h10v10h-10zM1 3.500h10M1 6h10M1 8.500h10M3.500 1v10M6 1v10M8.500 1v10" fill="none" stroke="#b01010" stroke-width="0.800"/></g>
<g transform="translate(634.10 15.80) scale(0.9)"><path d="M2.200 10v-4.500a3.800 3.800 0 0 1 7.600 0v4.500h-2.400v-4.500a1.400 1.400 0 0 0-2.800 0v4.500z" fill="#d81818" stroke="#6a0000" stroke-width="0.700"/><rect x="2.200" y="8.600" width="2.400" height="1.600" fill="#eee"/><rect x="7.400" y="8.600" width="2.400" height="1.600" fill="#eee"/></g>
<g transform="translate(650.60 15.80) scale(0.9)"><circle cx="6" cy="6" r="5" fill="#6a3a9a" stroke="#3a0a0a" stroke-width="0.800"/><path d="M1 6h10M6 1v10M2.500 2.500l7 7M9.500 2.500l-7 7" stroke="#e03030" stroke-width="0.700"/><circle cx="6" cy="6" r="2.600" fill="none" stroke="#e03030" stroke-width="0.700"/></g>
<g transform="translate(671.60 15.80) scale(0.9)"><circle cx="6" cy="6" r="4.800" fill="#f4d8d8" stroke="#a01818" stroke-width="1.200"/><circle cx="6" cy="6" r="2" fill="none" stroke="#a01818" stroke-width="1"/><path d="M6 0.600v3.400M6 8v3.400M0.600 6h3.400M8 6h3.400" stroke="#a01818" stroke-width="1.200"/></g>
<g transform="translate(693.60 15.80) scale(0.9)"><circle cx="5" cy="5" r="3.600" fill="#e8e8e8" stroke="#9c9c9c" stroke-width="1"/><path d="M3.400 5h3.200M5 3.400v3.200" stroke="#9c9c9c" stroke-width="0.800"/><path d="M7.800 7.800l3.200 3.200" stroke="#9c9c9c" stroke-width="1.500"/></g>
<g transform="translate(750.60 15.80) scale(0.9)"><circle cx="5" cy="5" r="3.600" fill="#e8e8e8" stroke="#9c9c9c" stroke-width="1"/><path d="M3.400 5h3.200" stroke="#9c9c9c" stroke-width="0.800"/><path d="M7.800 7.800l3.200 3.200" stroke="#9c9c9c" stroke-width="1.500"/></g>
<path d="M59.5 12.7 v17" stroke="#b8b8b8" stroke-width="1"/><path d="M60.5 12.7 v17" stroke="#f4f4f4" stroke-width="1"/>
<path d="M81.5 12.7 v17" stroke="#b8b8b8" stroke-width="1"/><path d="M82.5 12.7 v17" stroke="#f4f4f4" stroke-width="1"/>
<path d="M119.5 12.7 v17" stroke="#b8b8b8" stroke-width="1"/><path d="M120.5 12.7 v17" stroke="#f4f4f4" stroke-width="1"/>
<path d="M191.5 12.7 v17" stroke="#b8b8b8" stroke-width="1"/><path d="M192.5 12.7 v17" stroke="#f4f4f4" stroke-width="1"/>
<path d="M231.0 12.7 v17" stroke="#b8b8b8" stroke-width="1"/><path d="M232.0 12.7 v17" stroke="#f4f4f4" stroke-width="1"/>
<path d="M249.5 12.7 v17" stroke="#b8b8b8" stroke-width="1"/><path d="M250.5 12.7 v17" stroke="#f4f4f4" stroke-width="1"/>
<path d="M378.5 12.7 v17" stroke="#b8b8b8" stroke-width="1"/><path d="M379.5 12.7 v17" stroke="#f4f4f4" stroke-width="1"/>
<path d="M533.5 12.7 v17" stroke="#b8b8b8" stroke-width="1"/><path d="M534.5 12.7 v17" stroke="#f4f4f4" stroke-width="1"/>
<path d="M572.5 12.7 v17" stroke="#b8b8b8" stroke-width="1"/><path d="M573.5 12.7 v17" stroke="#f4f4f4" stroke-width="1"/>
<path d="M627.5 12.7 v17" stroke="#b8b8b8" stroke-width="1"/><path d="M628.5 12.7 v17" stroke="#f4f4f4" stroke-width="1"/>
<path d="M665.5 12.7 v17" stroke="#b8b8b8" stroke-width="1"/><path d="M666.5 12.7 v17" stroke="#f4f4f4" stroke-width="1"/>
<path d="M687.5 12.7 v17" stroke="#b8b8b8" stroke-width="1"/><path d="M688.5 12.7 v17" stroke="#f4f4f4" stroke-width="1"/>
<path d="M405.0 13.7 v15" stroke="#c0c0c0" stroke-width="2" stroke-dasharray="1 1.6"/>
<g transform="translate(10.10 38.80) scale(0.9)"><path d="M3.500 1v9l2.200-2l1.600 3.400l1.400-0.700l-1.600-3.200h3z" fill="#fff" stroke="#111" stroke-width="0.900" stroke-linejoin="round"/></g>
<g transform="translate(30.60 38.80) scale(0.9)"><rect x="2.600" y="4.800" width="6.800" height="2.800" rx="1.200" fill="#444" stroke="#111" stroke-width="0.700"/><path d="M6 0.800v3M2 1.800l2 2.400M10 1.800l-2 2.400M0.600 6.200h2M9.400 6.200h2M2 10.800l2-2.600M10 10.800l-2-2.600M6 8v3" stroke="#222" stroke-width="0.900"/></g>
<g transform="translate(48.60 38.80) scale(0.9)"><path d="M3 4.500h6v6h-6zM6 4.500v-3l-2 2M6 1.500l2 2" fill="#e4e4e4" stroke="#9c9c9c" stroke-width="0.900"/></g>
<g transform="translate(65.60 38.80) scale(0.9)"><path d="M1 2v8M3 6h2M5 4h5v5h-5zM8 1.500h3v3" fill="none" stroke="#9c9c9c" stroke-width="0.900"/></g>
<g transform="translate(81.60 38.80) scale(0.9)"><path d="M1.500 2h6v3h-6zM4.500 7h6v3h-6zM9 1.500h2v2" fill="none" stroke="#9c9c9c" stroke-width="0.900"/></g>
<g transform="translate(98.60 38.80) scale(0.9)"><circle cx="5" cy="5" r="3.500" fill="#e6e6e6" stroke="#9c9c9c" stroke-width="0.900"/><path d="M7.500 7.500l3.500 3.500M8.500 1.500l2.500 1" stroke="#9c9c9c" stroke-width="1.100"/></g>
<g transform="translate(134.60 38.80) scale(0.9)"><rect x="1" y="1" width="10" height="10" fill="none" stroke="#111" stroke-width="1.600" stroke-dasharray="1.700 1.700"/><ellipse cx="6" cy="6" rx="3" ry="1.800" fill="#fff" stroke="#2040c0" stroke-width="0.900"/><circle cx="6" cy="6" r="0.900" fill="#2040c0"/></g>
<g transform="translate(156.60 38.80) scale(0.9)"><path d="M6 0.800v5.500M3.600 3.200l2.400-2.400l2.400 2.400" fill="none" stroke="#111" stroke-width="1.100"/><rect x="3" y="6.300" width="6" height="2.400" fill="#111"/><rect x="1.600" y="9.600" width="8.800" height="1.400" fill="#111"/></g>
<g transform="translate(173.60 38.80) scale(0.9)"><path d="M3.500 0.800v8l2-1.800l1.500 3.200l1.300-0.600l-1.500-3h2.700z" fill="#fff" stroke="#2038c8" stroke-width="0.900" stroke-linejoin="round"/><path d="M0.800 8q5 4 10.400 0" fill="none" stroke="#2038c8" stroke-width="0.900"/><path d="M0.600 8l1.800-0.400M11.400 8l-1.800-0.400" stroke="#2038c8" stroke-width="0.900"/></g>
<g transform="translate(190.60 38.80) scale(0.9)"><path d="M4 10.500l0.600-3l4-6l2 1.300l-4 6z" fill="#fff" stroke="#111" stroke-width="0.900" stroke-linejoin="round"/><path d="M4 10.500l1.200-0.500" stroke="#111" stroke-width="1.200"/></g>
<g transform="translate(211.60 38.80) scale(0.9)"><path d="M2.500 2.500h7v7h-7zM1 1h2v2h-2zM9 1h2v2h-2zM1 9h2v2h-2zM9 9h2v2h-2z" fill="none" stroke="#9c9c9c" stroke-width="0.900"/></g>
<g transform="translate(227.60 38.80) scale(0.9)"><path d="M1.500 3.500h6v6h-6zM4.500 1.500h6v6h-6z" fill="none" stroke="#9c9c9c" stroke-width="0.900"/></g>
<g transform="translate(249.60 38.80) scale(0.9)"><path d="M6 1v10M2.500 6h7M4 3.500l2-2.500l2 2.500M3.500 4.500a3 3 0 1 0 5 0" fill="none" stroke="#9c9c9c" stroke-width="0.900"/></g>
<g transform="translate(267.60 38.80) scale(0.9)"><path d="M6 1v10M2.500 6h7M4 8.500l2 2.500l2-2.500M3.500 7.500a3 3 0 1 1 5 0" fill="none" stroke="#9c9c9c" stroke-width="0.900"/></g>
<g transform="translate(287.60 38.80) scale(0.9)"><path d="M9 4a3.500 3.500 0 1 0 0.500 4M9 1.500v2.700h-2.700" fill="none" stroke="#9c9c9c" stroke-width="0.900"/></g>
<g transform="translate(304.60 38.80) scale(0.9)"><path d="M6 0.800v10.400M0.800 6h10.400M6 0.800l-1.500 2M6 0.800l1.500 2M6 11.200l-1.500-2M6 11.200l1.500-2M0.800 6l2-1.500M0.800 6l2 1.500M11.200 6l-2-1.500M11.200 6l-2 1.500" fill="none" stroke="#9c9c9c" stroke-width="0.900"/></g>
<g transform="translate(322.60 38.80) scale(0.9)"><path d="M5 2v8h-4zM7 2v8h4z" fill="#e4e4e4" stroke="#9c9c9c" stroke-width="0.900"/></g>
<g transform="translate(343.60 38.80) scale(0.9)"><path d="M2 2h8v3h-5v5h-3z" fill="none" stroke="#9c9c9c" stroke-width="0.900"/></g>
<g transform="translate(364.60 38.80) scale(0.9)"><circle cx="6" cy="6" r="4.800" fill="#f4d8d8" stroke="#a01818" stroke-width="1.200"/><circle cx="6" cy="6" r="2" fill="none" stroke="#a01818" stroke-width="1"/><path d="M6 0.600v3.400M6 8v3.400M0.600 6h3.400M8 6h3.400" stroke="#a01818" stroke-width="1.200"/></g>
<g transform="translate(391.60 38.80) scale(0.9)"><path d="M1.500 2v8M1.500 6h2.500M4 4h3.500v4h-3.500zM10.500 2v8M7.500 6h3" fill="none" stroke="#9c9c9c" stroke-width="0.900"/></g>
<g transform="translate(407.60 38.80) scale(0.9)"><path d="M1.500 4h4v4h-4zM5.500 6h3M10.500 2v8M8.500 4v4" fill="none" stroke="#9c9c9c" stroke-width="0.900"/></g>
<g transform="translate(424.60 38.80) scale(0.9)"><path d="M2 1.500h8M2 4h8M3.500 6h5v4.500h-5zM6 1.500v4.500" fill="none" stroke="#9c9c9c" stroke-width="0.900"/></g>
<g transform="translate(442.60 38.80) scale(0.9)"><path d="M2 10.500h8M4 1.500h4v4h-4zM6 5.500v5M3 8h6" fill="none" stroke="#9c9c9c" stroke-width="0.900"/></g>
<g transform="translate(460.60 38.80) scale(0.9)"><path d="M1.500 5l3-3h5v5l-3 3h-5zM4.500 2v5h5M6.500 10l3-3" fill="#e4e4e4" stroke="#9c9c9c" stroke-width="0.900"/></g>
<g transform="translate(475.60 38.80) scale(0.9)"><path d="M1.500 6l2.500-2.500h4v4l-2.500 2.500h-4zM5 1.500h5.500v5.500" fill="#e4e4e4" stroke="#9c9c9c" stroke-width="0.900"/></g>
<g transform="translate(497.60 38.80) scale(0.9)"><path d="M1.500 2.500h4v2.500h-4zM4 7h6.500v2.500h-6.500zM3.500 5v3.200" fill="none" stroke="#9c9c9c" stroke-width="0.900"/></g>
<g transform="translate(514.60 38.80) scale(0.9)"><path d="M1.500 7h4v2.500h-4zM4 2.500h6.500v2.500h-6.500zM3.500 7v-3.200" fill="none" stroke="#9c9c9c" stroke-width="0.900"/></g>
<g transform="translate(532.60 38.80) scale(0.9)"><path d="M2 1.500h2.500v6h-2.500zM7 4.500h2.500v6h-2.500zM4.500 3h3.500" fill="none" stroke="#9c9c9c" stroke-width="0.900"/></g>
<g transform="translate(549.60 38.80) scale(0.9)"><path d="M2 4.500h2.500v6h-2.500zM7 1.500h2.500v6h-2.500zM4.500 9h3.500" fill="none" stroke="#9c9c9c" stroke-width="0.900"/></g>
<g transform="translate(566.60 38.80) scale(0.9)"><path d="M1.500 5a3 2 0 1 1 6 1.500a3 2 0 1 0 3 1.500M5 8.500l-1 2.500" fill="none" stroke="#9c9c9c" stroke-width="0.900"/></g>
<g transform="translate(584.60 38.80) scale(0.9)"><path d="M2 7.500a4 2.200 0 1 1 8 0a4 2.200 0 1 1-8 0M7 3l3-1.500" fill="none" stroke="#9c9c9c" stroke-width="0.900"/></g>
<path d="M114.5 35.7 v17" stroke="#b8b8b8" stroke-width="1"/><path d="M115.5 35.7 v17" stroke="#f4f4f4" stroke-width="1"/>
<path d="M205.5 35.7 v17" stroke="#b8b8b8" stroke-width="1"/><path d="M206.5 35.7 v17" stroke="#f4f4f4" stroke-width="1"/>
<path d="M243.5 35.7 v17" stroke="#b8b8b8" stroke-width="1"/><path d="M244.5 35.7 v17" stroke="#f4f4f4" stroke-width="1"/>
<path d="M282.5 35.7 v17" stroke="#b8b8b8" stroke-width="1"/><path d="M283.5 35.7 v17" stroke="#f4f4f4" stroke-width="1"/>
<path d="M337.5 35.7 v17" stroke="#b8b8b8" stroke-width="1"/><path d="M338.5 35.7 v17" stroke="#f4f4f4" stroke-width="1"/>
<path d="M358.5 35.7 v17" stroke="#b8b8b8" stroke-width="1"/><path d="M359.5 35.7 v17" stroke="#f4f4f4" stroke-width="1"/>
<path d="M380.5 35.7 v17" stroke="#b8b8b8" stroke-width="1"/><path d="M381.5 35.7 v17" stroke="#f4f4f4" stroke-width="1"/>
<path d="M492.5 35.7 v17" stroke="#b8b8b8" stroke-width="1"/><path d="M493.5 35.7 v17" stroke="#f4f4f4" stroke-width="1"/>
<path d="M124.0 36.7 v15" stroke="#c0c0c0" stroke-width="2" stroke-dasharray="1 1.6"/>
<path d="M386.0 36.7 v15" stroke="#c0c0c0" stroke-width="2" stroke-dasharray="1 1.6"/></svg>
<div class="abs combo"><b>1:25</b><i></i><svg class="abs" style="right:1px;top:3px" width="8" height="7" viewBox="-4 -3.500 8 7"><path transform="translate(0.0 0.0)" d="M-2.400 -1.200L0 1.200L2.400 -1.200" fill="none" stroke="#8a8a8a" stroke-width="1.500"/></svg></div>
<div class="abs rs"><div class="abs sbtn" style="left:0;top:0.500px;width:12px;height:11px"></div><div class="abs sbtn" style="left:0.500px;top:253.500px;width:11.500px;height:40px;background:linear-gradient(90deg,#fcfcfc,#e2e2e2)"></div><div class="abs sbtn" style="left:0;top:597px;width:12px;height:11px"></div><svg class="abs" style="left:0;top:0" width="12" height="609" viewBox="0 0 12 609"><path transform="translate(6.0 6.0)" d="M-2.400 1.200L0 -1.200L2.400 1.200" fill="none" stroke="#444" stroke-width="1.500"/><path transform="translate(6.0 602.5)" d="M-2.400 -1.200L0 1.200L2.400 -1.200" fill="none" stroke="#444" stroke-width="1.500"/><path d="M4 271.500h4M4 273.500h4M4 275.500h4" stroke="#9a9a9a" stroke-width="0.800"/></svg></div>
<div class="abs bot"></div><div class="abs lft"></div><div class="abs tbline"></div>
<div class="abs lib">
<div class="abs libtitle"><span>Библиотека</span><svg class="abs" style="left:152px;top:2px" width="25" height="12" viewBox="0 0 25 12"><rect x="2.500" y="2.600" width="9.500" height="8" rx="1.500" fill="#3a3a3a"/><rect x="4.600" y="7.600" width="5" height="1.500" fill="#e8e8e8"/><path d="M16.200 4.400l4.600 4.600M20.800 4.400l-4.600 4.600" stroke="#fff" stroke-width="1.600"/></svg></div>
<div class="abs libbody">
<div class="abs tab" style="left:4.0px;width:33.5px">Мебель</div>
<div class="abs tab sel" style="left:38.0px;width:48.0px">Элементы</div>
<div class="abs tab" style="left:86.2px;width:47.3px">Материалы</div>
<div class="abs tab" style="left:135.0px;width:32.5px">Другое</div>
<div class="abs tabline"></div>
<div class="abs cmb"><svg class="abs" style="left:0.800px;top:1.500px" width="11" height="11" viewBox="0 0 11 11"><path d="M0.800 1.500h4l1 1h4.400v7.700h-9.400z" fill="#f0cc50" stroke="#c89a20" stroke-width="0.600"/><path d="M0.800 3.400h9.400v6.800h-9.400z" fill="#f8e080"/></svg><span>Штанги, Рейлинги, Колс</span><div class="abs sbtn" style="right:0.500px;top:0.500px;width:10.500px;height:12.200px"></div><svg class="abs" style="right:1.500px;top:3.500px" width="8" height="7" viewBox="-4 -3.500 8 7"><path transform="translate(0.0 0.0)" d="M-2.400 -1.200L0 1.200L2.400 -1.200" fill="none" stroke="#222" stroke-width="1.500"/></svg></div>
<svg class="abs" style="left:122px;top:18.500px" width="55" height="18" viewBox="0 0 55 18"><path d="M2.500 5h4l1 1.200h5v7h-10z" fill="#f4f0a0" stroke="#5a5a20" stroke-width="0.800"/><path d="M7.500 12v-4M5.800 9.600l1.700-1.800l1.700 1.800" fill="none" stroke="#1a5a1a" stroke-width="0.900"/><rect x="18.500" y="1" width="16" height="16" rx="1.500" fill="#dde3ee" stroke="#8a96b0" stroke-width="0.900"/><rect x="22" y="4.500" width="3" height="3" fill="none" stroke="#223" stroke-width="0.800"/><rect x="27.500" y="9.500" width="3" height="3" fill="none" stroke="#223" stroke-width="0.800"/><path d="M22 9.500h3.500M27.500 14.500h3.500" stroke="#2a3a9a" stroke-width="0.900"/><path d="M37.500 6h11.500M37.500 9.300h11.500M37.500 12.600h11.500" stroke="#666" stroke-width="1"/><path d="M39 3.500v12M42.300 3.500v12M45.600 3.500v12M48.600 3.500v12" stroke="#4a4a4a" stroke-width="1.500"/></svg>
<div class="abs list">
<div class="abs lbl" style="left:-0.4px;top:50.7px">Нога D60.1100мм<br>хром</div>
<div class="abs lbl" style="left:75.9px;top:50.7px">Нога D60.710мм<br>хром</div>
<div class="abs lbl" style="left:-0.4px;top:126.7px">Нога D60.820мм<br>хром</div>
<div class="abs lbl" style="left:75.9px;top:126.7px">Рейлинг D16 в<br>сборе</div>
<div class="abs lbl" style="left:-0.4px;top:202.6px">Угол 90гр Рейлинг<br>D16мм</div>
<div class="abs lbl" style="left:75.9px;top:202.6px">Фланец для штанги<br>D50</div>
<div class="abs lbl" style="left:-0.4px;top:278.6px">Штанга 25мм (хром)</div>
<div class="abs lbl" style="left:75.9px;top:278.6px">Штанга D25 хром с<br>2-мя шт.д</div>
<div class="abs lbl" style="left:-0.4px;top:354.6px">Штанга D50 2<br>Фланца</div>
<div class="abs lbl" style="left:75.9px;top:354.6px">Штанга D50 2<br>Фланца Г</div>
<div class="abs lbl" style="left:-0.4px;top:430.6px">Штанга D50<br>низ-Фланец</div>
<div class="abs lbl" style="left:75.9px;top:430.6px">Штанга D50<br>Фланец-верх</div>
<div class="abs vs"><div class="abs sbtn" style="left:0;top:0.500px;width:11.200px;height:11px"></div><div class="abs sbtn" style="left:0;top:13.500px;width:11.200px;height:393px;background:linear-gradient(90deg,#fdfdfd,#e4e4e4)"></div><div class="abs sbtn" style="left:0;top:490.500px;width:11.200px;height:11px"></div><svg class="abs" style="left:0;top:0" width="11" height="502" viewBox="0 0 11 502"><path transform="translate(5.6 6.0)" d="M-2.400 1.200L0 -1.200L2.400 1.200" fill="none" stroke="#222" stroke-width="1.500"/><path transform="translate(5.6 496.0)" d="M-2.400 -1.200L0 1.200L2.400 -1.200" fill="none" stroke="#222" stroke-width="1.500"/><path d="M3.500 208.500h4M3.500 210.500h4M3.500 212.500h4" stroke="#9a9a9a" stroke-width="0.800"/></svg></div>
<div class="abs hs"><div class="abs sbtn" style="left:1px;top:0;width:11.500px;height:10.200px"></div><div class="abs sbtn" style="left:14.500px;top:0;width:127px;height:10.200px"></div><div class="abs sbtn" style="left:143px;top:0;width:11.500px;height:10.200px"></div><svg class="abs" style="left:0;top:0" width="167" height="10" viewBox="0 0 167 10"><path transform="translate(6.8 5.0)" d="M1.200 -2.400L-1.200 0L1.200 2.400" fill="none" stroke="#222" stroke-width="1.500"/><path transform="translate(148.8 5.0)" d="M-1.200 -2.400L1.200 0L-1.200 2.400" fill="none" stroke="#222" stroke-width="1.500"/><path d="M76.500 3v4M78.500 3v4M80.500 3v4" stroke="#9a9a9a" stroke-width="0.800"/></svg></div>
</div>
</div>
</div>
<svg class="abs" style="left:0;top:0;pointer-events:none" width="200" height="665" viewBox="0 0 200 665"><defs><linearGradient id="chr" x1="0" y1="0" x2="1" y2="0"><stop offset="0" stop-color="#9a9a9a"/><stop offset="0.45" stop-color="#f4f4f4"/><stop offset="1" stop-color="#777"/></linearGradient><linearGradient id="legv" x1="0" y1="0" x2="0" y2="1"><stop offset="0" stop-color="#1c1c1c"/><stop offset="0.800" stop-color="#c4c4c4"/><stop offset="0.930" stop-color="#9a9a9a"/><stop offset="0.950" stop-color="#161616"/><stop offset="1" stop-color="#161616"/></linearGradient><linearGradient id="chrv" x1="0" y1="0" x2="0" y2="1"><stop offset="0" stop-color="#8a8a8a"/><stop offset="0.400" stop-color="#f6f6f6"/><stop offset="1" stop-color="#7a7a7a"/></linearGradient></defs>
<rect x="48" y="118.500" width="2.200" height="36" fill="url(#legv)"/>
<rect x="124.300" y="118.500" width="3" height="36" fill="url(#legv)"/>
<rect x="48" y="195" width="2.400" height="36" fill="url(#legv)"/>
<path d="M113.500 209.500L135.500 216.500" stroke="#777" stroke-width="2"/><path d="M113.500 209L135.500 216" stroke="#ccc" stroke-width="0.700"/><circle cx="136.500" cy="217" r="1.200" fill="#555"/>
<path d="M35 291.500L36 290L49 285.800L62.500 290.500L63.400 292.200" fill="none" stroke="#8e8e8e" stroke-width="2.200" stroke-linejoin="round"/><path d="M36 289.600L49 285.300L62.500 290" fill="none" stroke="#dcdcdc" stroke-width="0.700"/><rect x="48" y="283.800" width="2.200" height="2.400" fill="#9a9a9a"/>
<ellipse cx="125.500" cy="292" rx="9.800" ry="3.400" fill="#8e8e8e"/><ellipse cx="125.500" cy="290.600" rx="9.800" ry="3.200" fill="#c4c4c4" stroke="#888" stroke-width="0.400"/><rect x="118.300" y="287" width="14.400" height="3.600" fill="#b0b0b0"/><ellipse cx="125.500" cy="287" rx="7.200" ry="2.400" fill="#e0e0e0" stroke="#8a8a8a" stroke-width="0.500"/>
<rect x="47.300" y="349" width="4.400" height="40" fill="url(#chr)"/><ellipse cx="49.500" cy="349" rx="2.200" ry="0.900" fill="#ccc" stroke="#777" stroke-width="0.400"/>
<rect x="123.300" y="352" width="4.400" height="28" fill="url(#chr)"/><rect x="121.800" y="349.500" width="7.400" height="3" fill="#aaa"/><rect x="121.800" y="379.500" width="7.400" height="3" fill="#999"/>
<rect x="46.200" y="427" width="6.600" height="30" fill="url(#chr)"/><rect x="45.600" y="424.700" width="7.800" height="2.600" rx="0.800" fill="#b8b8b8" stroke="#777" stroke-width="0.400"/><rect x="45.600" y="456" width="7.800" height="2.200" rx="0.800" fill="#8a8a8a"/>
<g transform="rotate(17 126 441.500)"><rect x="114" y="438.300" width="24" height="6.400" rx="1.500" fill="url(#chrv)" stroke="#777" stroke-width="0.500"/><ellipse cx="114.600" cy="441.500" rx="1.500" ry="3.400" fill="#d8d8d8" stroke="#666" stroke-width="0.500"/><ellipse cx="137.600" cy="441.500" rx="1.700" ry="3.500" fill="#6a6a6a" stroke="#444" stroke-width="0.500"/></g>
<rect x="46.400" y="504" width="6" height="29" fill="url(#chr)"/><rect x="45.400" y="501" width="8" height="3" fill="#aaa"/><rect x="45.400" y="532" width="8" height="2.400" fill="#888"/>
<rect x="122.600" y="504" width="6" height="29" fill="url(#chr)"/><rect x="121.600" y="501" width="8" height="3" fill="#aaa"/><rect x="121.600" y="532" width="8" height="2.400" fill="#888"/>
<path d="M38 590.500L62 598" stroke="#444" stroke-width="1.300"/><circle cx="38" cy="590.500" r="1.100" fill="#333"/><circle cx="62" cy="598" r="1.100" fill="#333"/>
<rect x="122" y="578" width="6.400" height="32" fill="url(#chr)"/></svg>
</body></html>
